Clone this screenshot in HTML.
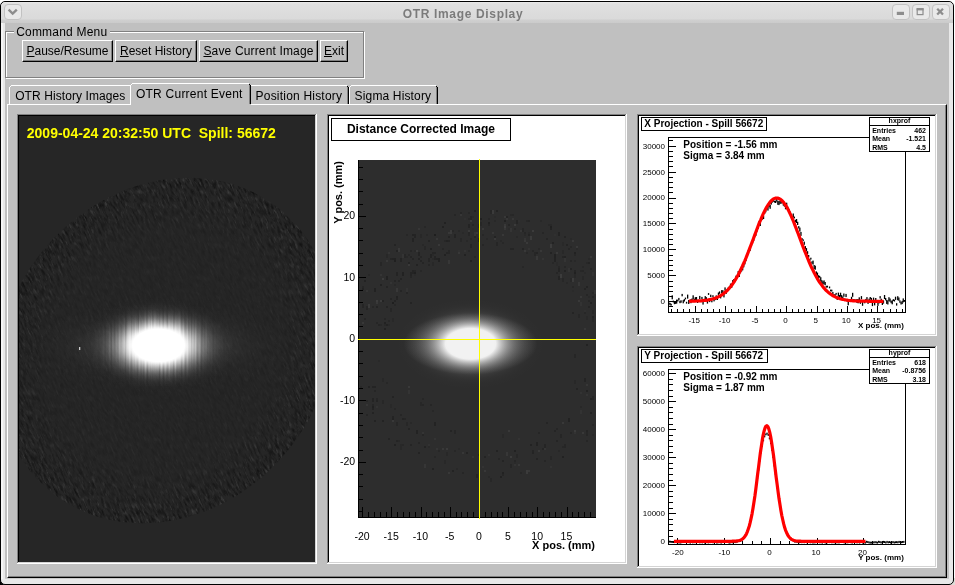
<!DOCTYPE html>
<html><head><meta charset="utf-8"><title>OTR Image Display</title>
<style>
html,body{margin:0;padding:0;background:#fff;}
body{width:955px;height:585px;overflow:hidden;position:relative;font-family:"Liberation Sans",sans-serif;font-size:12px;color:#000;}
.abs{position:absolute;}
div{box-sizing:border-box;}
.rb{position:absolute;background:#c0c0c0;border-top:1px solid #fff;border-left:1px solid #fff;border-right:1px solid #000;border-bottom:1px solid #000;}
.rb:after{content:"";position:absolute;left:0;top:0;right:0;bottom:0;border-right:1px solid #808080;border-bottom:1px solid #808080;}
.btxt{position:absolute;left:0;right:0;top:0;bottom:0;text-align:center;line-height:21px;font-size:12px;white-space:pre;z-index:2}
.btxt u{text-decoration:underline;text-underline-offset:1px}
svg{position:absolute;display:block;overflow:hidden}
text{font-family:"Liberation Sans",sans-serif;}
</style></head><body><div id="root" style="position:absolute;left:0;top:0;width:955px;height:585px;will-change:transform;transform:translateZ(0)">

<div class="abs" style="left:0;top:578px;width:8px;height:7px;background:#000"></div>
<div class="abs" style="left:946px;top:578px;width:9px;height:7px;background:#e0ded8"></div>
<div class="abs" id="win" style="left:0;top:1px;width:954px;height:584px;border:1px solid #000;border-radius:5px;background:#e8e8e8;overflow:hidden">
</div>
<div class="abs" style="left:1px;top:2px;width:952px;height:21px;border-radius:5px 5px 0 0;background:linear-gradient(#e9e9e9 0px,#e0e0e0 2px,#dadada 17px,#cfcfcf 18px,#cbcbcb 21px)"></div>
<div class="abs" style="left:1px;top:23px;width:2px;height:556px;background:#f4f4f4"></div>
<div class="abs" style="left:5px;top:23px;width:944px;height:556px;background:#c0c0c0"></div>
<div class="abs" style="left:5px;top:578px;width:944px;height:1px;background:#cacaca"></div>
<div class="abs" style="left:0;top:6px;width:926px;text-align:center;font-weight:bold;font-size:12px;letter-spacing:0.66px;color:#7b7b7b;line-height:16px">OTR Image Display</div>
<div class="abs" style="left:4px;top:4px;width:18px;height:16px;border:1px solid #c2c2c2;border-radius:4px;background:#e9e9e9"></div><svg style="left:4px;top:4px" width="17" height="16" viewBox="0 0 17 16"><path d="M4.6 5.6 L8.7 9.5 L12.8 5.6" fill="none" stroke="#8d8d8d" stroke-width="2.4"/></svg>
<div class="abs" style="left:892.2px;top:4px;width:17.5px;height:16px;border:1px solid #c2c2c2;border-radius:4px;background:#e9e9e9"></div><svg style="left:892.2px;top:4px" width="17" height="16" viewBox="0 0 17 16"><rect x="4.8" y="7.8" width="7.2" height="3.2" fill="#8d8d8d"/></svg>
<div class="abs" style="left:912.2px;top:4px;width:17.5px;height:16px;border:1px solid #c2c2c2;border-radius:4px;background:#e9e9e9"></div><svg style="left:912.2px;top:4px" width="17" height="16" viewBox="0 0 17 16"><rect x="5.2" y="5" width="5.8" height="5.6" fill="none" stroke="#8d8d8d" stroke-width="1.2"/><rect x="4.6" y="4" width="7" height="2.4" fill="#8d8d8d"/></svg>
<div class="abs" style="left:932.2px;top:4px;width:17.5px;height:16px;border:1px solid #c2c2c2;border-radius:4px;background:#e9e9e9"></div><svg style="left:932.2px;top:4px" width="17" height="16" viewBox="0 0 17 16"><path d="M5.2 4.7 L11.0 10.5 M11.0 4.7 L5.2 10.5" fill="none" stroke="#8d8d8d" stroke-width="2.3"/></svg>
<div class="abs" style="left:6px;top:32px;width:359px;height:47px;border:1px solid #fff"></div>
<div class="abs" style="left:5px;top:31px;width:359px;height:47px;border:1px solid #808080"></div>
<div class="abs" style="left:14px;top:24px;width:96px;height:16px;background:#c0c0c0;line-height:16px;font-size:12px;padding-left:2.2px;letter-spacing:0.2px;white-space:pre">Command Menu</div>
<div class="rb" style="left:22px;top:40px;width:91px;height:22px"><div class="btxt" style="letter-spacing:0px"><u>P</u>ause/Resume</div></div>
<div class="rb" style="left:115px;top:40px;width:82px;height:22px"><div class="btxt" style="letter-spacing:0px"><u>R</u>eset History</div></div>
<div class="rb" style="left:199px;top:40px;width:119px;height:22px"><div class="btxt" style="letter-spacing:0.15px"><u>S</u>ave Current Image</div></div>
<div class="rb" style="left:320px;top:40px;width:28px;height:22px"><div class="btxt" style="letter-spacing:0px"><u>E</u>xit</div></div>
<div class="abs" style="left:7px;top:104px;width:940px;height:474px;border-top:1px solid #fff;border-left:1px solid #fff;border-right:1px solid #000;border-bottom:1px solid #000"></div>
<div class="abs" style="left:8px;top:105px;width:938px;height:472px;border-right:1px solid #808080;border-bottom:1px solid #808080"></div>
<svg style="left:9px;top:85px" width="124" height="20" viewBox="0 0 124 20" shape-rendering="crispEdges"><rect x="0" y="2" width="1" height="17" fill="#fff"/><rect x="1" y="1" width="1" height="1" fill="#fff"/><rect x="2" y="0" width="120" height="1" fill="#fff"/><rect x="122" y="1" width="1" height="18" fill="#808080"/><rect x="122" y="1" width="1" height="1" fill="#000"/><rect x="123" y="2" width="1" height="17" fill="#000"/></svg><div class="abs" style="left:15.2px;top:88.5px;line-height:14px;font-size:12px;white-space:pre;letter-spacing:0.08px">OTR History Images</div>
<svg style="left:249px;top:85px" width="100" height="20" viewBox="0 0 100 20" shape-rendering="crispEdges"><rect x="0" y="2" width="1" height="17" fill="#fff"/><rect x="1" y="1" width="1" height="1" fill="#fff"/><rect x="2" y="0" width="96" height="1" fill="#fff"/><rect x="98" y="1" width="1" height="18" fill="#808080"/><rect x="98" y="1" width="1" height="1" fill="#000"/><rect x="99" y="2" width="1" height="17" fill="#000"/></svg><div class="abs" style="left:255.6px;top:88.5px;line-height:14px;font-size:12px;white-space:pre;letter-spacing:0.2px">Position History</div>
<svg style="left:349px;top:85px" width="89" height="20" viewBox="0 0 89 20" shape-rendering="crispEdges"><rect x="0" y="2" width="1" height="17" fill="#fff"/><rect x="1" y="1" width="1" height="1" fill="#fff"/><rect x="2" y="0" width="85" height="1" fill="#fff"/><rect x="87" y="1" width="1" height="18" fill="#808080"/><rect x="87" y="1" width="1" height="1" fill="#000"/><rect x="88" y="2" width="1" height="17" fill="#000"/></svg><div class="abs" style="left:354.6px;top:88.5px;line-height:14px;font-size:12px;white-space:pre;letter-spacing:0.15px">Sigma History</div>
<svg style="left:130px;top:83px" width="121" height="22" viewBox="0 0 121 22" shape-rendering="crispEdges"><rect x="0" y="2" width="121" height="21" fill="#c0c0c0"/><rect x="2" y="0" width="117" height="3" fill="#c0c0c0"/><rect x="0" y="2" width="1" height="20" fill="#fff"/><rect x="1" y="1" width="1" height="1" fill="#fff"/><rect x="2" y="0" width="117" height="1" fill="#fff"/><rect x="119" y="1" width="1" height="20" fill="#808080"/><rect x="119" y="1" width="1" height="1" fill="#000"/><rect x="120" y="2" width="1" height="19" fill="#000"/></svg><div class="abs" style="left:136px;top:86.5px;line-height:14px;font-size:12px;white-space:pre;letter-spacing:0.23px">OTR Current Event</div>
<div class="abs" style="left:17px;top:114px;width:300px;height:450px;background:#fff"></div><div class="abs" style="left:17px;top:114px;width:299px;height:449px;background:#808080"></div><div class="abs" style="left:18px;top:115px;width:298px;height:448px;background:#d4d4d4"></div><div class="abs" style="left:18px;top:115px;width:297px;height:447px;background:#000"></div>
<div class="abs" style="left:327px;top:114px;width:300px;height:450px;background:#fff"></div><div class="abs" style="left:327px;top:114px;width:299px;height:449px;background:#808080"></div><div class="abs" style="left:328px;top:115px;width:298px;height:448px;background:#d4d4d4"></div><div class="abs" style="left:328px;top:115px;width:297px;height:447px;background:#000"></div>
<div class="abs" style="left:637px;top:114px;width:300px;height:222px;background:#fff"></div><div class="abs" style="left:637px;top:114px;width:299px;height:221px;background:#808080"></div><div class="abs" style="left:638px;top:115px;width:298px;height:220px;background:#d4d4d4"></div><div class="abs" style="left:638px;top:115px;width:297px;height:219px;background:#000"></div>
<div class="abs" style="left:637px;top:346px;width:300px;height:222px;background:#fff"></div><div class="abs" style="left:637px;top:346px;width:299px;height:221px;background:#808080"></div><div class="abs" style="left:638px;top:347px;width:298px;height:220px;background:#d4d4d4"></div><div class="abs" style="left:638px;top:347px;width:297px;height:219px;background:#000"></div>
<svg style="left:19px;top:116px" width="296" height="446" viewBox="0 0 296 446"><defs><radialGradient id="lg" cx="0" cy="0" r="1" gradientUnits="userSpaceOnUse" gradientTransform="translate(139.5,229.4) scale(80,50)"><stop offset="0.0000" stop-color="rgb(255,255,255)" stop-opacity="1.0000"/><stop offset="0.0250" stop-color="rgb(255,255,255)" stop-opacity="1.0000"/><stop offset="0.0500" stop-color="rgb(255,255,255)" stop-opacity="1.0000"/><stop offset="0.0750" stop-color="rgb(255,255,255)" stop-opacity="1.0000"/><stop offset="0.1000" stop-color="rgb(255,255,255)" stop-opacity="1.0000"/><stop offset="0.1250" stop-color="rgb(255,255,255)" stop-opacity="1.0000"/><stop offset="0.1500" stop-color="rgb(255,255,255)" stop-opacity="1.0000"/><stop offset="0.1750" stop-color="rgb(255,255,255)" stop-opacity="1.0000"/><stop offset="0.2000" stop-color="rgb(255,255,255)" stop-opacity="1.0000"/><stop offset="0.2250" stop-color="rgb(255,255,255)" stop-opacity="1.0000"/><stop offset="0.2500" stop-color="rgb(255,255,255)" stop-opacity="1.0000"/><stop offset="0.2750" stop-color="rgb(255,255,255)" stop-opacity="1.0000"/><stop offset="0.3000" stop-color="rgb(255,255,255)" stop-opacity="1.0000"/><stop offset="0.3250" stop-color="rgb(255,255,255)" stop-opacity="1.0000"/><stop offset="0.3500" stop-color="rgb(255,255,255)" stop-opacity="0.9195"/><stop offset="0.3750" stop-color="rgb(255,255,255)" stop-opacity="0.7954"/><stop offset="0.4000" stop-color="rgb(255,255,255)" stop-opacity="0.6812"/><stop offset="0.4250" stop-color="rgb(255,255,255)" stop-opacity="0.5776"/><stop offset="0.4500" stop-color="rgb(255,255,255)" stop-opacity="0.4849"/><stop offset="0.4750" stop-color="rgb(255,255,255)" stop-opacity="0.4030"/><stop offset="0.5000" stop-color="rgb(255,255,255)" stop-opacity="0.3316"/><stop offset="0.5250" stop-color="rgb(255,255,255)" stop-opacity="0.2701"/><stop offset="0.5500" stop-color="rgb(255,255,255)" stop-opacity="0.2179"/><stop offset="0.5750" stop-color="rgb(255,255,255)" stop-opacity="0.1740"/><stop offset="0.6000" stop-color="rgb(255,255,255)" stop-opacity="0.1375"/><stop offset="0.6250" stop-color="rgb(255,255,255)" stop-opacity="0.1076"/><stop offset="0.6500" stop-color="rgb(255,255,255)" stop-opacity="0.0834"/><stop offset="0.6750" stop-color="rgb(255,255,255)" stop-opacity="0.0640"/><stop offset="0.7000" stop-color="rgb(255,255,255)" stop-opacity="0.0486"/><stop offset="0.7250" stop-color="rgb(255,255,255)" stop-opacity="0.0366"/><stop offset="0.7500" stop-color="rgb(255,255,255)" stop-opacity="0.0272"/><stop offset="0.7750" stop-color="rgb(255,255,255)" stop-opacity="0.0201"/><stop offset="0.8000" stop-color="rgb(255,255,255)" stop-opacity="0.0146"/><stop offset="0.8250" stop-color="rgb(255,255,255)" stop-opacity="0.0106"/><stop offset="0.8500" stop-color="rgb(255,255,255)" stop-opacity="0.0076"/><stop offset="0.8750" stop-color="rgb(255,255,255)" stop-opacity="0.0054"/><stop offset="0.9000" stop-color="rgb(255,255,255)" stop-opacity="0.0038"/><stop offset="0.9250" stop-color="rgb(255,255,255)" stop-opacity="0.0026"/><stop offset="0.9500" stop-color="rgb(255,255,255)" stop-opacity="0.0018"/><stop offset="0.9750" stop-color="rgb(255,255,255)" stop-opacity="0.0012"/><stop offset="1.0000" stop-color="rgb(255,255,255)" stop-opacity="0.0000"/></radialGradient><radialGradient id="lh" cx="0" cy="0" r="1" gradientUnits="userSpaceOnUse" gradientTransform="translate(140,229.4) scale(125,42)"><stop offset="0.0000" stop-color="rgb(255,255,255)" stop-opacity="0.2700"/><stop offset="0.0250" stop-color="rgb(255,255,255)" stop-opacity="0.2692"/><stop offset="0.0500" stop-color="rgb(255,255,255)" stop-opacity="0.2666"/><stop offset="0.0750" stop-color="rgb(255,255,255)" stop-opacity="0.2625"/><stop offset="0.1000" stop-color="rgb(255,255,255)" stop-opacity="0.2568"/><stop offset="0.1250" stop-color="rgb(255,255,255)" stop-opacity="0.2497"/><stop offset="0.1500" stop-color="rgb(255,255,255)" stop-opacity="0.2413"/><stop offset="0.1750" stop-color="rgb(255,255,255)" stop-opacity="0.2317"/><stop offset="0.2000" stop-color="rgb(255,255,255)" stop-opacity="0.2211"/><stop offset="0.2250" stop-color="rgb(255,255,255)" stop-opacity="0.2096"/><stop offset="0.2500" stop-color="rgb(255,255,255)" stop-opacity="0.1975"/><stop offset="0.2750" stop-color="rgb(255,255,255)" stop-opacity="0.1850"/><stop offset="0.3000" stop-color="rgb(255,255,255)" stop-opacity="0.1722"/><stop offset="0.3250" stop-color="rgb(255,255,255)" stop-opacity="0.1592"/><stop offset="0.3500" stop-color="rgb(255,255,255)" stop-opacity="0.1463"/><stop offset="0.3750" stop-color="rgb(255,255,255)" stop-opacity="0.1337"/><stop offset="0.4000" stop-color="rgb(255,255,255)" stop-opacity="0.1213"/><stop offset="0.4250" stop-color="rgb(255,255,255)" stop-opacity="0.1094"/><stop offset="0.4500" stop-color="rgb(255,255,255)" stop-opacity="0.0981"/><stop offset="0.4750" stop-color="rgb(255,255,255)" stop-opacity="0.0874"/><stop offset="0.5000" stop-color="rgb(255,255,255)" stop-opacity="0.0774"/><stop offset="0.5250" stop-color="rgb(255,255,255)" stop-opacity="0.0681"/><stop offset="0.5500" stop-color="rgb(255,255,255)" stop-opacity="0.0595"/><stop offset="0.5750" stop-color="rgb(255,255,255)" stop-opacity="0.0517"/><stop offset="0.6000" stop-color="rgb(255,255,255)" stop-opacity="0.0446"/><stop offset="0.6250" stop-color="rgb(255,255,255)" stop-opacity="0.0383"/><stop offset="0.6500" stop-color="rgb(255,255,255)" stop-opacity="0.0327"/><stop offset="0.6750" stop-color="rgb(255,255,255)" stop-opacity="0.0277"/><stop offset="0.7000" stop-color="rgb(255,255,255)" stop-opacity="0.0233"/><stop offset="0.7250" stop-color="rgb(255,255,255)" stop-opacity="0.0195"/><stop offset="0.7500" stop-color="rgb(255,255,255)" stop-opacity="0.0162"/><stop offset="0.7750" stop-color="rgb(255,255,255)" stop-opacity="0.0134"/><stop offset="0.8000" stop-color="rgb(255,255,255)" stop-opacity="0.0110"/><stop offset="0.8250" stop-color="rgb(255,255,255)" stop-opacity="0.0090"/><stop offset="0.8500" stop-color="rgb(255,255,255)" stop-opacity="0.0073"/><stop offset="0.8750" stop-color="rgb(255,255,255)" stop-opacity="0.0059"/><stop offset="0.9000" stop-color="rgb(255,255,255)" stop-opacity="0.0047"/><stop offset="0.9250" stop-color="rgb(255,255,255)" stop-opacity="0.0037"/><stop offset="0.9500" stop-color="rgb(255,255,255)" stop-opacity="0.0030"/><stop offset="0.9750" stop-color="rgb(255,255,255)" stop-opacity="0.0023"/><stop offset="1.0000" stop-color="rgb(255,255,255)" stop-opacity="0.0000"/></radialGradient><clipPath id="lc"><ellipse cx="146.4" cy="234.5" rx="181.8" ry="158.2" transform="rotate(-51 146.4 234.5)"/></clipPath><filter id="ln" x="0" y="0" width="100%" height="100%" color-interpolation-filters="sRGB"><feTurbulence type="fractalNoise" baseFrequency="0.45 0.15" numOctaves="2" seed="3" result="t"/><feColorMatrix type="matrix" values="0 0 0 0 0  0 0 0 0 0  0 0 0 0 0  1.5 0 0 0 -0.62"/></filter><filter id="ln2" x="0" y="0" width="100%" height="100%" color-interpolation-filters="sRGB"><feTurbulence type="fractalNoise" baseFrequency="0.45 0.15" numOctaves="2" seed="9" result="t"/><feColorMatrix type="matrix" values="0 0 0 0 1  0 0 0 0 1  0 0 0 0 1  0.45 0 0 0 -0.24"/></filter><radialGradient id="lm" cx="0" cy="0" r="1" gradientUnits="userSpaceOnUse" gradientTransform="translate(146.4,234.5) rotate(-51) scale(181.8,158.2)"><stop offset="0" stop-color="#fff" stop-opacity="0.13"/><stop offset="0.7" stop-color="#fff" stop-opacity="0.27"/><stop offset="0.92" stop-color="#fff" stop-opacity="0.75"/><stop offset="1" stop-color="#fff" stop-opacity="1"/></radialGradient><mask id="lmask"><rect width="296" height="446" fill="url(#lm)"/></mask><filter id="ls" x="0" y="0" width="100%" height="100%" color-interpolation-filters="sRGB"><feTurbulence type="fractalNoise" baseFrequency="0.5 0.008" numOctaves="2" seed="5"/><feColorMatrix type="matrix" values="0 0 0 0 1  0 0 0 0 1  0 0 0 0 1  1.3 0 0 0 -0.3"/></filter><radialGradient id="lg2" cx="0" cy="0" r="1" gradientUnits="userSpaceOnUse" gradientTransform="translate(139.5,229.4) scale(85,52)"><stop offset="0.0000" stop-color="rgb(255,255,255)" stop-opacity="1.0000"/><stop offset="0.0250" stop-color="rgb(255,255,255)" stop-opacity="1.0000"/><stop offset="0.0500" stop-color="rgb(255,255,255)" stop-opacity="1.0000"/><stop offset="0.0750" stop-color="rgb(255,255,255)" stop-opacity="1.0000"/><stop offset="0.1000" stop-color="rgb(255,255,255)" stop-opacity="1.0000"/><stop offset="0.1250" stop-color="rgb(255,255,255)" stop-opacity="1.0000"/><stop offset="0.1500" stop-color="rgb(255,255,255)" stop-opacity="1.0000"/><stop offset="0.1750" stop-color="rgb(255,255,255)" stop-opacity="1.0000"/><stop offset="0.2000" stop-color="rgb(255,255,255)" stop-opacity="1.0000"/><stop offset="0.2250" stop-color="rgb(255,255,255)" stop-opacity="1.0000"/><stop offset="0.2500" stop-color="rgb(255,255,255)" stop-opacity="1.0000"/><stop offset="0.2750" stop-color="rgb(255,255,255)" stop-opacity="1.0000"/><stop offset="0.3000" stop-color="rgb(255,255,255)" stop-opacity="1.0000"/><stop offset="0.3250" stop-color="rgb(255,255,255)" stop-opacity="1.0000"/><stop offset="0.3500" stop-color="rgb(255,255,255)" stop-opacity="0.9758"/><stop offset="0.3750" stop-color="rgb(255,255,255)" stop-opacity="0.8441"/><stop offset="0.4000" stop-color="rgb(255,255,255)" stop-opacity="0.7229"/><stop offset="0.4250" stop-color="rgb(255,255,255)" stop-opacity="0.6129"/><stop offset="0.4500" stop-color="rgb(255,255,255)" stop-opacity="0.5145"/><stop offset="0.4750" stop-color="rgb(255,255,255)" stop-opacity="0.4276"/><stop offset="0.5000" stop-color="rgb(255,255,255)" stop-opacity="0.3519"/><stop offset="0.5250" stop-color="rgb(255,255,255)" stop-opacity="0.2867"/><stop offset="0.5500" stop-color="rgb(255,255,255)" stop-opacity="0.2312"/><stop offset="0.5750" stop-color="rgb(255,255,255)" stop-opacity="0.1846"/><stop offset="0.6000" stop-color="rgb(255,255,255)" stop-opacity="0.1460"/><stop offset="0.6250" stop-color="rgb(255,255,255)" stop-opacity="0.1142"/><stop offset="0.6500" stop-color="rgb(255,255,255)" stop-opacity="0.0885"/><stop offset="0.6750" stop-color="rgb(255,255,255)" stop-opacity="0.0679"/><stop offset="0.7000" stop-color="rgb(255,255,255)" stop-opacity="0.0516"/><stop offset="0.7250" stop-color="rgb(255,255,255)" stop-opacity="0.0388"/><stop offset="0.7500" stop-color="rgb(255,255,255)" stop-opacity="0.0289"/><stop offset="0.7750" stop-color="rgb(255,255,255)" stop-opacity="0.0213"/><stop offset="0.8000" stop-color="rgb(255,255,255)" stop-opacity="0.0155"/><stop offset="0.8250" stop-color="rgb(255,255,255)" stop-opacity="0.0112"/><stop offset="0.8500" stop-color="rgb(255,255,255)" stop-opacity="0.0080"/><stop offset="0.8750" stop-color="rgb(255,255,255)" stop-opacity="0.0057"/><stop offset="0.9000" stop-color="rgb(255,255,255)" stop-opacity="0.0040"/><stop offset="0.9250" stop-color="rgb(255,255,255)" stop-opacity="0.0028"/><stop offset="0.9500" stop-color="rgb(255,255,255)" stop-opacity="0.0019"/><stop offset="0.9750" stop-color="rgb(255,255,255)" stop-opacity="0.0013"/><stop offset="1.0000" stop-color="rgb(255,255,255)" stop-opacity="0.0000"/></radialGradient><mask id="lsm"><rect x="30" y="150" width="230" height="160" filter="url(#ls)"/></mask></defs><rect width="296" height="446" fill="#262626"/><g clip-path="url(#lc)"><g mask="url(#lmask)"><g transform="skewX(22)"><rect x="-200" width="500" height="446" filter="url(#ln)"/><rect x="-200" width="500" height="446" filter="url(#ln2)"/></g></g></g><rect width="296" height="446" fill="url(#lh)"/><rect width="296" height="446" fill="url(#lg)"/><rect x="30" y="150" width="230" height="160" fill="url(#lg2)" mask="url(#lsm)"/><rect x="60" y="231" width="1.3" height="3" fill="#e8e8e8" opacity="0.85"/><text x="7.8" y="22" font-size="14" font-weight="bold" fill="#ffff00" xml:space="preserve" style="white-space:pre">2009-04-24 20:32:50 UTC  Spill: 56672</text></svg>
<svg style="left:329px;top:116px" width="296" height="446" viewBox="329 116 296 446"><defs><radialGradient id="mg" cx="0" cy="0" r="1" gradientUnits="userSpaceOnUse" gradientTransform="translate(470.6,343.8) scale(77.4,47.5)"><stop offset="0.0000" stop-color="rgb(242,242,242)" stop-opacity="1.0000"/><stop offset="0.0250" stop-color="rgb(242,242,242)" stop-opacity="1.0000"/><stop offset="0.0500" stop-color="rgb(242,242,242)" stop-opacity="1.0000"/><stop offset="0.0750" stop-color="rgb(242,242,242)" stop-opacity="1.0000"/><stop offset="0.1000" stop-color="rgb(242,242,242)" stop-opacity="1.0000"/><stop offset="0.1250" stop-color="rgb(242,242,242)" stop-opacity="1.0000"/><stop offset="0.1500" stop-color="rgb(242,242,242)" stop-opacity="1.0000"/><stop offset="0.1750" stop-color="rgb(242,242,242)" stop-opacity="1.0000"/><stop offset="0.2000" stop-color="rgb(242,242,242)" stop-opacity="1.0000"/><stop offset="0.2250" stop-color="rgb(242,242,242)" stop-opacity="1.0000"/><stop offset="0.2500" stop-color="rgb(242,242,242)" stop-opacity="1.0000"/><stop offset="0.2750" stop-color="rgb(242,242,242)" stop-opacity="1.0000"/><stop offset="0.3000" stop-color="rgb(242,242,242)" stop-opacity="1.0000"/><stop offset="0.3250" stop-color="rgb(242,242,242)" stop-opacity="0.9880"/><stop offset="0.3500" stop-color="rgb(242,242,242)" stop-opacity="0.8632"/><stop offset="0.3750" stop-color="rgb(242,242,242)" stop-opacity="0.7467"/><stop offset="0.4000" stop-color="rgb(242,242,242)" stop-opacity="0.6395"/><stop offset="0.4250" stop-color="rgb(242,242,242)" stop-opacity="0.5422"/><stop offset="0.4500" stop-color="rgb(242,242,242)" stop-opacity="0.4552"/><stop offset="0.4750" stop-color="rgb(242,242,242)" stop-opacity="0.3783"/><stop offset="0.5000" stop-color="rgb(242,242,242)" stop-opacity="0.3113"/><stop offset="0.5250" stop-color="rgb(242,242,242)" stop-opacity="0.2536"/><stop offset="0.5500" stop-color="rgb(242,242,242)" stop-opacity="0.2045"/><stop offset="0.5750" stop-color="rgb(242,242,242)" stop-opacity="0.1633"/><stop offset="0.6000" stop-color="rgb(242,242,242)" stop-opacity="0.1291"/><stop offset="0.6250" stop-color="rgb(242,242,242)" stop-opacity="0.1011"/><stop offset="0.6500" stop-color="rgb(242,242,242)" stop-opacity="0.0783"/><stop offset="0.6750" stop-color="rgb(242,242,242)" stop-opacity="0.0601"/><stop offset="0.7000" stop-color="rgb(242,242,242)" stop-opacity="0.0456"/><stop offset="0.7250" stop-color="rgb(242,242,242)" stop-opacity="0.0343"/><stop offset="0.7500" stop-color="rgb(242,242,242)" stop-opacity="0.0256"/><stop offset="0.7750" stop-color="rgb(242,242,242)" stop-opacity="0.0188"/><stop offset="0.8000" stop-color="rgb(242,242,242)" stop-opacity="0.0137"/><stop offset="0.8250" stop-color="rgb(242,242,242)" stop-opacity="0.0099"/><stop offset="0.8500" stop-color="rgb(242,242,242)" stop-opacity="0.0071"/><stop offset="0.8750" stop-color="rgb(242,242,242)" stop-opacity="0.0050"/><stop offset="0.9000" stop-color="rgb(242,242,242)" stop-opacity="0.0035"/><stop offset="0.9250" stop-color="rgb(242,242,242)" stop-opacity="0.0024"/><stop offset="0.9500" stop-color="rgb(242,242,242)" stop-opacity="0.0017"/><stop offset="0.9750" stop-color="rgb(242,242,242)" stop-opacity="0.0011"/><stop offset="1.0000" stop-color="rgb(242,242,242)" stop-opacity="0.0000"/></radialGradient><radialGradient id="mh" cx="0" cy="0" r="1" gradientUnits="userSpaceOnUse" gradientTransform="translate(470.5,343.8) scale(67,31)"><stop offset="0" stop-color="#f2f2f2" stop-opacity="0.34"/><stop offset="0.45" stop-color="#f2f2f2" stop-opacity="0.27"/><stop offset="0.75" stop-color="#f2f2f2" stop-opacity="0.13"/><stop offset="0.92" stop-color="#f2f2f2" stop-opacity="0.045"/><stop offset="1" stop-color="#f2f2f2" stop-opacity="0"/></radialGradient><clipPath id="mc"><rect x="358" y="160" width="238" height="358"/></clipPath></defs><rect x="329" y="116" width="296" height="446" fill="#fff"/><rect x="331.5" y="118.5" width="179" height="22" fill="#fff" stroke="#000" stroke-width="1"/><text x="346.9" y="132.6" font-size="12" font-weight="bold">Distance Corrected Image</text><rect x="358" y="160" width="238" height="358" fill="#2d2d2d"/><g clip-path="url(#mc)"><rect x="504" y="226" width="2" height="4" fill="#484848" opacity="0.38"/><rect x="396" y="288" width="2" height="4" fill="#484848" opacity="0.45"/><rect x="410" y="276" width="2" height="2" fill="#1c1c1c" opacity="0.42"/><rect x="374" y="288" width="2" height="4" fill="#1c1c1c" opacity="0.59"/><rect x="434" y="234" width="2" height="2" fill="#1c1c1c" opacity="0.53"/><rect x="584" y="310" width="2" height="2" fill="#484848" opacity="0.51"/><rect x="546" y="238" width="2" height="2" fill="#1c1c1c" opacity="0.46"/><rect x="488" y="222" width="2" height="2" fill="#1c1c1c" opacity="0.36"/><rect x="468" y="212" width="2" height="2" fill="#1c1c1c" opacity="0.33"/><rect x="564" y="266" width="2" height="2" fill="#1c1c1c" opacity="0.36"/><rect x="390" y="282" width="2" height="2" fill="#484848" opacity="0.29"/><rect x="390" y="308" width="2" height="4" fill="#1c1c1c" opacity="0.37"/><rect x="466" y="240" width="2" height="2" fill="#1c1c1c" opacity="0.23"/><rect x="550" y="224" width="2" height="2" fill="#1c1c1c" opacity="0.25"/><rect x="432" y="262" width="2" height="4" fill="#1c1c1c" opacity="0.27"/><rect x="468" y="232" width="2" height="2" fill="#1c1c1c" opacity="0.37"/><rect x="524" y="238" width="2" height="2" fill="#484848" opacity="0.31"/><rect x="558" y="232" width="2" height="4" fill="#1c1c1c" opacity="0.60"/><rect x="452" y="230" width="2" height="2" fill="#1c1c1c" opacity="0.29"/><rect x="570" y="246" width="2" height="2" fill="#1c1c1c" opacity="0.35"/><rect x="588" y="306" width="2" height="2" fill="#1c1c1c" opacity="0.44"/><rect x="530" y="236" width="2" height="4" fill="#484848" opacity="0.53"/><rect x="586" y="286" width="2" height="2" fill="#1c1c1c" opacity="0.56"/><rect x="400" y="278" width="2" height="2" fill="#1c1c1c" opacity="0.47"/><rect x="524" y="234" width="2" height="2" fill="#1c1c1c" opacity="0.24"/><rect x="574" y="252" width="2" height="4" fill="#1c1c1c" opacity="0.32"/><rect x="590" y="268" width="2" height="2" fill="#1c1c1c" opacity="0.39"/><rect x="434" y="234" width="2" height="2" fill="#1c1c1c" opacity="0.57"/><rect x="562" y="278" width="2" height="4" fill="#1c1c1c" opacity="0.30"/><rect x="474" y="210" width="2" height="2" fill="#1c1c1c" opacity="0.56"/><rect x="364" y="318" width="2" height="2" fill="#1c1c1c" opacity="0.44"/><rect x="376" y="302" width="2" height="2" fill="#1c1c1c" opacity="0.59"/><rect x="494" y="220" width="2" height="2" fill="#1c1c1c" opacity="0.23"/><rect x="470" y="220" width="2" height="2" fill="#484848" opacity="0.52"/><rect x="382" y="300" width="2" height="2" fill="#1c1c1c" opacity="0.55"/><rect x="518" y="220" width="2" height="2" fill="#484848" opacity="0.45"/><rect x="528" y="232" width="2" height="2" fill="#1c1c1c" opacity="0.24"/><rect x="586" y="294" width="2" height="2" fill="#1c1c1c" opacity="0.36"/><rect x="410" y="250" width="2" height="2" fill="#1c1c1c" opacity="0.41"/><rect x="482" y="234" width="2" height="2" fill="#1c1c1c" opacity="0.29"/><rect x="424" y="246" width="2" height="4" fill="#1c1c1c" opacity="0.30"/><rect x="434" y="252" width="2" height="2" fill="#1c1c1c" opacity="0.46"/><rect x="510" y="214" width="2" height="2" fill="#1c1c1c" opacity="0.28"/><rect x="512" y="218" width="2" height="2" fill="#484848" opacity="0.35"/><rect x="460" y="238" width="2" height="4" fill="#1c1c1c" opacity="0.34"/><rect x="394" y="300" width="2" height="2" fill="#1c1c1c" opacity="0.53"/><rect x="594" y="290" width="2" height="4" fill="#484848" opacity="0.35"/><rect x="480" y="222" width="2" height="4" fill="#1c1c1c" opacity="0.33"/><rect x="398" y="280" width="2" height="2" fill="#1c1c1c" opacity="0.43"/><rect x="554" y="234" width="2" height="2" fill="#1c1c1c" opacity="0.36"/><rect x="588" y="262" width="2" height="2" fill="#1c1c1c" opacity="0.52"/><rect x="384" y="322" width="2" height="2" fill="#1c1c1c" opacity="0.58"/><rect x="432" y="252" width="2" height="2" fill="#1c1c1c" opacity="0.49"/><rect x="406" y="256" width="2" height="2" fill="#1c1c1c" opacity="0.31"/><rect x="542" y="232" width="2" height="2" fill="#1c1c1c" opacity="0.36"/><rect x="386" y="254" width="2" height="4" fill="#1c1c1c" opacity="0.25"/><rect x="504" y="224" width="2" height="4" fill="#484848" opacity="0.42"/><rect x="436" y="238" width="2" height="2" fill="#484848" opacity="0.39"/><rect x="442" y="248" width="2" height="2" fill="#1c1c1c" opacity="0.29"/><rect x="362" y="286" width="2" height="2" fill="#484848" opacity="0.30"/><rect x="428" y="264" width="2" height="2" fill="#1c1c1c" opacity="0.38"/><rect x="468" y="218" width="2" height="2" fill="#1c1c1c" opacity="0.29"/><rect x="386" y="286" width="2" height="2" fill="#1c1c1c" opacity="0.47"/><rect x="376" y="300" width="2" height="4" fill="#484848" opacity="0.58"/><rect x="490" y="210" width="2" height="2" fill="#1c1c1c" opacity="0.38"/><rect x="464" y="218" width="2" height="2" fill="#1c1c1c" opacity="0.41"/><rect x="386" y="276" width="2" height="4" fill="#1c1c1c" opacity="0.58"/><rect x="380" y="284" width="2" height="2" fill="#1c1c1c" opacity="0.59"/><rect x="478" y="226" width="2" height="2" fill="#1c1c1c" opacity="0.40"/><rect x="458" y="250" width="2" height="4" fill="#484848" opacity="0.42"/><rect x="384" y="324" width="2" height="2" fill="#1c1c1c" opacity="0.23"/><rect x="474" y="232" width="2" height="4" fill="#484848" opacity="0.31"/><rect x="496" y="242" width="2" height="4" fill="#1c1c1c" opacity="0.41"/><rect x="592" y="292" width="2" height="2" fill="#1c1c1c" opacity="0.25"/><rect x="414" y="274" width="2" height="2" fill="#1c1c1c" opacity="0.20"/><rect x="562" y="242" width="2" height="4" fill="#1c1c1c" opacity="0.24"/><rect x="422" y="262" width="2" height="2" fill="#1c1c1c" opacity="0.49"/><rect x="414" y="234" width="2" height="4" fill="#1c1c1c" opacity="0.53"/><rect x="448" y="232" width="2" height="2" fill="#484848" opacity="0.41"/><rect x="382" y="278" width="2" height="2" fill="#484848" opacity="0.57"/><rect x="446" y="240" width="2" height="2" fill="#1c1c1c" opacity="0.56"/><rect x="586" y="262" width="2" height="2" fill="#1c1c1c" opacity="0.25"/><rect x="574" y="252" width="2" height="2" fill="#1c1c1c" opacity="0.37"/><rect x="372" y="306" width="2" height="2" fill="#1c1c1c" opacity="0.36"/><rect x="436" y="258" width="2" height="2" fill="#1c1c1c" opacity="0.56"/><rect x="384" y="318" width="2" height="2" fill="#1c1c1c" opacity="0.40"/><rect x="432" y="254" width="2" height="2" fill="#1c1c1c" opacity="0.21"/><rect x="402" y="254" width="2" height="4" fill="#484848" opacity="0.26"/><rect x="572" y="278" width="2" height="2" fill="#484848" opacity="0.57"/><rect x="580" y="302" width="2" height="4" fill="#484848" opacity="0.23"/><rect x="592" y="296" width="2" height="2" fill="#1c1c1c" opacity="0.37"/><rect x="458" y="250" width="2" height="2" fill="#1c1c1c" opacity="0.27"/><rect x="504" y="220" width="2" height="2" fill="#1c1c1c" opacity="0.44"/><rect x="536" y="256" width="2" height="4" fill="#484848" opacity="0.43"/><rect x="582" y="266" width="2" height="2" fill="#1c1c1c" opacity="0.31"/><rect x="584" y="288" width="2" height="2" fill="#1c1c1c" opacity="0.51"/><rect x="408" y="262" width="2" height="2" fill="#1c1c1c" opacity="0.52"/><rect x="542" y="258" width="2" height="2" fill="#484848" opacity="0.29"/><rect x="366" y="306" width="2" height="4" fill="#1c1c1c" opacity="0.43"/><rect x="476" y="232" width="2" height="2" fill="#484848" opacity="0.48"/><rect x="394" y="244" width="2" height="2" fill="#1c1c1c" opacity="0.50"/><rect x="562" y="256" width="2" height="2" fill="#1c1c1c" opacity="0.46"/><rect x="554" y="254" width="2" height="4" fill="#1c1c1c" opacity="0.59"/><rect x="460" y="212" width="2" height="2" fill="#1c1c1c" opacity="0.42"/><rect x="424" y="226" width="2" height="2" fill="#1c1c1c" opacity="0.35"/><rect x="472" y="224" width="2" height="4" fill="#1c1c1c" opacity="0.37"/><rect x="478" y="224" width="2" height="2" fill="#1c1c1c" opacity="0.39"/><rect x="570" y="238" width="2" height="2" fill="#1c1c1c" opacity="0.21"/><rect x="400" y="258" width="2" height="4" fill="#1c1c1c" opacity="0.50"/><rect x="528" y="220" width="2" height="2" fill="#1c1c1c" opacity="0.43"/><rect x="420" y="256" width="2" height="2" fill="#1c1c1c" opacity="0.37"/><rect x="496" y="210" width="2" height="2" fill="#1c1c1c" opacity="0.57"/><rect x="416" y="250" width="2" height="2" fill="#484848" opacity="0.44"/><rect x="500" y="240" width="2" height="2" fill="#1c1c1c" opacity="0.25"/><rect x="508" y="224" width="2" height="2" fill="#1c1c1c" opacity="0.46"/><rect x="430" y="248" width="2" height="2" fill="#1c1c1c" opacity="0.58"/><rect x="420" y="260" width="2" height="2" fill="#1c1c1c" opacity="0.51"/><rect x="448" y="240" width="2" height="2" fill="#1c1c1c" opacity="0.45"/><rect x="416" y="264" width="2" height="2" fill="#1c1c1c" opacity="0.55"/><rect x="586" y="316" width="2" height="4" fill="#1c1c1c" opacity="0.21"/><rect x="592" y="316" width="2" height="2" fill="#1c1c1c" opacity="0.57"/><rect x="578" y="282" width="2" height="4" fill="#484848" opacity="0.39"/><rect x="570" y="268" width="2" height="2" fill="#1c1c1c" opacity="0.52"/><rect x="506" y="218" width="2" height="2" fill="#484848" opacity="0.38"/><rect x="412" y="258" width="2" height="2" fill="#1c1c1c" opacity="0.46"/><rect x="376" y="322" width="2" height="2" fill="#1c1c1c" opacity="0.37"/><rect x="524" y="250" width="2" height="2" fill="#484848" opacity="0.42"/><rect x="510" y="228" width="2" height="4" fill="#484848" opacity="0.32"/><rect x="414" y="272" width="2" height="2" fill="#1c1c1c" opacity="0.48"/><rect x="488" y="218" width="2" height="2" fill="#1c1c1c" opacity="0.29"/><rect x="438" y="244" width="2" height="2" fill="#484848" opacity="0.48"/><rect x="460" y="214" width="2" height="2" fill="#484848" opacity="0.38"/><rect x="402" y="272" width="2" height="4" fill="#1c1c1c" opacity="0.59"/><rect x="414" y="250" width="2" height="2" fill="#1c1c1c" opacity="0.21"/><rect x="428" y="240" width="2" height="2" fill="#1c1c1c" opacity="0.52"/><rect x="472" y="216" width="2" height="2" fill="#1c1c1c" opacity="0.24"/><rect x="504" y="216" width="2" height="2" fill="#484848" opacity="0.41"/><rect x="472" y="226" width="2" height="4" fill="#484848" opacity="0.23"/><rect x="470" y="218" width="2" height="2" fill="#1c1c1c" opacity="0.31"/><rect x="588" y="296" width="2" height="2" fill="#1c1c1c" opacity="0.24"/><rect x="396" y="272" width="2" height="4" fill="#1c1c1c" opacity="0.51"/><rect x="480" y="218" width="2" height="2" fill="#1c1c1c" opacity="0.52"/><rect x="536" y="252" width="2" height="2" fill="#1c1c1c" opacity="0.48"/><rect x="380" y="300" width="2" height="2" fill="#484848" opacity="0.54"/><rect x="386" y="260" width="2" height="2" fill="#484848" opacity="0.41"/><rect x="412" y="238" width="2" height="4" fill="#1c1c1c" opacity="0.57"/><rect x="558" y="266" width="2" height="2" fill="#1c1c1c" opacity="0.33"/><rect x="524" y="232" width="2" height="2" fill="#1c1c1c" opacity="0.39"/><rect x="418" y="258" width="2" height="2" fill="#1c1c1c" opacity="0.56"/><rect x="420" y="270" width="2" height="2" fill="#1c1c1c" opacity="0.33"/><rect x="574" y="270" width="2" height="4" fill="#1c1c1c" opacity="0.44"/><rect x="564" y="270" width="2" height="2" fill="#1c1c1c" opacity="0.56"/><rect x="368" y="304" width="2" height="4" fill="#484848" opacity="0.54"/><rect x="492" y="232" width="2" height="2" fill="#484848" opacity="0.39"/><rect x="560" y="274" width="2" height="4" fill="#484848" opacity="0.59"/><rect x="390" y="258" width="2" height="2" fill="#1c1c1c" opacity="0.46"/><rect x="556" y="272" width="2" height="2" fill="#1c1c1c" opacity="0.38"/><rect x="564" y="258" width="2" height="4" fill="#484848" opacity="0.26"/><rect x="540" y="250" width="2" height="2" fill="#484848" opacity="0.45"/><rect x="378" y="324" width="2" height="2" fill="#1c1c1c" opacity="0.43"/><rect x="572" y="280" width="2" height="2" fill="#484848" opacity="0.53"/><rect x="590" y="302" width="2" height="2" fill="#1c1c1c" opacity="0.56"/><rect x="432" y="258" width="2" height="2" fill="#1c1c1c" opacity="0.21"/><rect x="570" y="278" width="2" height="4" fill="#1c1c1c" opacity="0.28"/><rect x="472" y="228" width="2" height="2" fill="#1c1c1c" opacity="0.33"/><rect x="520" y="230" width="2" height="2" fill="#484848" opacity="0.34"/><rect x="434" y="256" width="2" height="4" fill="#1c1c1c" opacity="0.50"/><rect x="410" y="272" width="2" height="4" fill="#1c1c1c" opacity="0.48"/><rect x="494" y="236" width="2" height="2" fill="#1c1c1c" opacity="0.54"/><rect x="380" y="274" width="2" height="2" fill="#484848" opacity="0.32"/><rect x="528" y="234" width="2" height="2" fill="#1c1c1c" opacity="0.50"/><rect x="470" y="244" width="2" height="4" fill="#1c1c1c" opacity="0.49"/><rect x="550" y="226" width="2" height="2" fill="#1c1c1c" opacity="0.38"/><rect x="522" y="248" width="2" height="2" fill="#1c1c1c" opacity="0.47"/><rect x="428" y="258" width="2" height="4" fill="#1c1c1c" opacity="0.44"/><rect x="588" y="300" width="2" height="2" fill="#1c1c1c" opacity="0.37"/><rect x="408" y="264" width="2" height="2" fill="#484848" opacity="0.46"/><rect x="396" y="250" width="2" height="2" fill="#1c1c1c" opacity="0.57"/><rect x="442" y="226" width="2" height="2" fill="#1c1c1c" opacity="0.59"/><rect x="394" y="260" width="2" height="2" fill="#1c1c1c" opacity="0.30"/><rect x="574" y="274" width="2" height="4" fill="#1c1c1c" opacity="0.28"/><rect x="538" y="248" width="2" height="2" fill="#1c1c1c" opacity="0.30"/><rect x="474" y="236" width="2" height="2" fill="#1c1c1c" opacity="0.43"/><rect x="590" y="256" width="2" height="2" fill="#484848" opacity="0.43"/><rect x="412" y="270" width="2" height="4" fill="#1c1c1c" opacity="0.48"/><rect x="550" y="226" width="2" height="4" fill="#1c1c1c" opacity="0.55"/><rect x="504" y="220" width="2" height="2" fill="#1c1c1c" opacity="0.42"/><rect x="572" y="240" width="2" height="2" fill="#484848" opacity="0.44"/><rect x="564" y="236" width="2" height="2" fill="#1c1c1c" opacity="0.53"/><rect x="582" y="270" width="2" height="2" fill="#1c1c1c" opacity="0.36"/><rect x="388" y="252" width="2" height="2" fill="#484848" opacity="0.32"/><rect x="426" y="234" width="2" height="2" fill="#1c1c1c" opacity="0.26"/><rect x="512" y="248" width="2" height="2" fill="#1c1c1c" opacity="0.43"/><rect x="584" y="272" width="2" height="2" fill="#1c1c1c" opacity="0.22"/><rect x="394" y="258" width="2" height="4" fill="#1c1c1c" opacity="0.58"/><rect x="454" y="234" width="2" height="4" fill="#1c1c1c" opacity="0.50"/><rect x="492" y="210" width="2" height="4" fill="#484848" opacity="0.53"/><rect x="580" y="296" width="2" height="2" fill="#484848" opacity="0.41"/><rect x="512" y="214" width="2" height="2" fill="#1c1c1c" opacity="0.32"/><rect x="448" y="236" width="2" height="2" fill="#1c1c1c" opacity="0.50"/><rect x="552" y="242" width="2" height="2" fill="#1c1c1c" opacity="0.54"/><rect x="576" y="246" width="2" height="4" fill="#484848" opacity="0.48"/><rect x="478" y="238" width="2" height="4" fill="#1c1c1c" opacity="0.58"/><rect x="364" y="280" width="2" height="2" fill="#1c1c1c" opacity="0.55"/><rect x="516" y="220" width="2" height="4" fill="#1c1c1c" opacity="0.43"/><rect x="392" y="302" width="2" height="2" fill="#1c1c1c" opacity="0.55"/><rect x="462" y="232" width="2" height="2" fill="#1c1c1c" opacity="0.21"/><rect x="582" y="276" width="2" height="4" fill="#1c1c1c" opacity="0.26"/><rect x="430" y="254" width="2" height="4" fill="#1c1c1c" opacity="0.56"/><rect x="550" y="244" width="2" height="4" fill="#484848" opacity="0.55"/><rect x="588" y="258" width="2" height="2" fill="#1c1c1c" opacity="0.28"/><rect x="394" y="280" width="2" height="2" fill="#1c1c1c" opacity="0.45"/><rect x="422" y="244" width="2" height="2" fill="#1c1c1c" opacity="0.28"/><rect x="396" y="296" width="2" height="2" fill="#1c1c1c" opacity="0.58"/><rect x="556" y="252" width="2" height="2" fill="#484848" opacity="0.48"/><rect x="376" y="306" width="2" height="2" fill="#1c1c1c" opacity="0.54"/><rect x="566" y="244" width="2" height="2" fill="#1c1c1c" opacity="0.52"/><rect x="532" y="230" width="2" height="2" fill="#484848" opacity="0.59"/><rect x="390" y="298" width="2" height="2" fill="#1c1c1c" opacity="0.46"/><rect x="508" y="228" width="2" height="2" fill="#1c1c1c" opacity="0.20"/><rect x="458" y="230" width="2" height="2" fill="#1c1c1c" opacity="0.27"/><rect x="380" y="324" width="2" height="2" fill="#1c1c1c" opacity="0.27"/><rect x="362" y="286" width="2" height="4" fill="#1c1c1c" opacity="0.57"/><rect x="464" y="250" width="2" height="2" fill="#484848" opacity="0.27"/><rect x="468" y="224" width="2" height="4" fill="#1c1c1c" opacity="0.51"/><rect x="482" y="228" width="2" height="2" fill="#484848" opacity="0.44"/><rect x="414" y="270" width="2" height="4" fill="#1c1c1c" opacity="0.42"/><rect x="568" y="248" width="2" height="2" fill="#1c1c1c" opacity="0.40"/><rect x="574" y="260" width="2" height="2" fill="#1c1c1c" opacity="0.28"/><rect x="388" y="320" width="2" height="2" fill="#1c1c1c" opacity="0.33"/><rect x="450" y="230" width="2" height="4" fill="#484848" opacity="0.49"/><rect x="400" y="290" width="2" height="2" fill="#1c1c1c" opacity="0.43"/><rect x="470" y="218" width="2" height="2" fill="#1c1c1c" opacity="0.22"/><rect x="514" y="224" width="2" height="2" fill="#484848" opacity="0.51"/><rect x="488" y="222" width="2" height="4" fill="#1c1c1c" opacity="0.30"/><rect x="592" y="272" width="2" height="4" fill="#484848" opacity="0.22"/><rect x="516" y="236" width="2" height="2" fill="#1c1c1c" opacity="0.25"/><rect x="404" y="254" width="2" height="4" fill="#1c1c1c" opacity="0.41"/><rect x="388" y="324" width="2" height="2" fill="#1c1c1c" opacity="0.24"/><rect x="468" y="230" width="2" height="2" fill="#484848" opacity="0.47"/><rect x="406" y="234" width="2" height="2" fill="#1c1c1c" opacity="0.30"/><rect x="470" y="238" width="2" height="2" fill="#1c1c1c" opacity="0.35"/><rect x="548" y="224" width="2" height="2" fill="#1c1c1c" opacity="0.26"/><rect x="454" y="214" width="2" height="2" fill="#1c1c1c" opacity="0.39"/><rect x="526" y="220" width="2" height="2" fill="#1c1c1c" opacity="0.29"/><rect x="532" y="250" width="2" height="2" fill="#1c1c1c" opacity="0.39"/><rect x="522" y="228" width="2" height="4" fill="#1c1c1c" opacity="0.38"/><rect x="362" y="322" width="2" height="2" fill="#484848" opacity="0.42"/><rect x="510" y="248" width="2" height="2" fill="#1c1c1c" opacity="0.45"/><rect x="480" y="218" width="2" height="2" fill="#1c1c1c" opacity="0.31"/><rect x="528" y="248" width="2" height="2" fill="#484848" opacity="0.25"/><rect x="576" y="248" width="2" height="2" fill="#1c1c1c" opacity="0.54"/><rect x="506" y="216" width="2" height="2" fill="#1c1c1c" opacity="0.51"/><rect x="482" y="244" width="2" height="2" fill="#1c1c1c" opacity="0.40"/><rect x="580" y="270" width="2" height="2" fill="#1c1c1c" opacity="0.32"/><rect x="514" y="228" width="2" height="2" fill="#1c1c1c" opacity="0.33"/><rect x="502" y="234" width="2" height="2" fill="#484848" opacity="0.41"/><rect x="502" y="242" width="2" height="2" fill="#1c1c1c" opacity="0.29"/><rect x="550" y="252" width="2" height="2" fill="#1c1c1c" opacity="0.54"/><rect x="410" y="256" width="2" height="2" fill="#1c1c1c" opacity="0.46"/><rect x="468" y="234" width="2" height="2" fill="#1c1c1c" opacity="0.29"/><rect x="448" y="250" width="2" height="4" fill="#1c1c1c" opacity="0.40"/><rect x="490" y="212" width="2" height="2" fill="#1c1c1c" opacity="0.29"/><rect x="386" y="306" width="2" height="2" fill="#1c1c1c" opacity="0.47"/><rect x="558" y="268" width="2" height="4" fill="#1c1c1c" opacity="0.52"/><rect x="494" y="238" width="2" height="2" fill="#484848" opacity="0.48"/><rect x="526" y="252" width="2" height="2" fill="#1c1c1c" opacity="0.35"/><rect x="394" y="284" width="2" height="2" fill="#1c1c1c" opacity="0.23"/><rect x="526" y="242" width="2" height="2" fill="#484848" opacity="0.46"/><rect x="524" y="240" width="2" height="2" fill="#484848" opacity="0.43"/><rect x="362" y="304" width="2" height="4" fill="#1c1c1c" opacity="0.45"/><rect x="584" y="310" width="2" height="4" fill="#1c1c1c" opacity="0.35"/><rect x="394" y="304" width="2" height="2" fill="#1c1c1c" opacity="0.32"/><rect x="540" y="220" width="2" height="2" fill="#1c1c1c" opacity="0.31"/><rect x="556" y="262" width="2" height="4" fill="#1c1c1c" opacity="0.20"/><rect x="470" y="216" width="2" height="2" fill="#1c1c1c" opacity="0.45"/><rect x="464" y="218" width="2" height="2" fill="#484848" opacity="0.31"/><rect x="578" y="300" width="2" height="2" fill="#484848" opacity="0.48"/><rect x="418" y="228" width="2" height="2" fill="#484848" opacity="0.33"/><rect x="420" y="234" width="2" height="4" fill="#1c1c1c" opacity="0.31"/><rect x="408" y="254" width="2" height="2" fill="#1c1c1c" opacity="0.34"/><rect x="412" y="234" width="2" height="2" fill="#1c1c1c" opacity="0.60"/><rect x="380" y="262" width="2" height="4" fill="#1c1c1c" opacity="0.40"/><rect x="438" y="258" width="2" height="4" fill="#1c1c1c" opacity="0.55"/><rect x="592" y="310" width="2" height="4" fill="#1c1c1c" opacity="0.30"/><rect x="444" y="240" width="2" height="2" fill="#1c1c1c" opacity="0.33"/><rect x="398" y="248" width="2" height="4" fill="#484848" opacity="0.46"/><rect x="552" y="262" width="2" height="2" fill="#1c1c1c" opacity="0.29"/><rect x="566" y="282" width="2" height="2" fill="#1c1c1c" opacity="0.31"/><rect x="554" y="258" width="2" height="4" fill="#1c1c1c" opacity="0.57"/><rect x="386" y="324" width="2" height="2" fill="#1c1c1c" opacity="0.55"/><rect x="574" y="272" width="2" height="2" fill="#1c1c1c" opacity="0.36"/><rect x="366" y="290" width="2" height="2" fill="#484848" opacity="0.35"/><rect x="554" y="234" width="2" height="2" fill="#484848" opacity="0.29"/><rect x="418" y="252" width="2" height="4" fill="#1c1c1c" opacity="0.47"/><rect x="568" y="268" width="2" height="4" fill="#484848" opacity="0.27"/><rect x="564" y="256" width="2" height="2" fill="#1c1c1c" opacity="0.55"/><rect x="562" y="250" width="2" height="4" fill="#1c1c1c" opacity="0.31"/><rect x="570" y="260" width="2" height="2" fill="#1c1c1c" opacity="0.42"/><rect x="572" y="290" width="2" height="2" fill="#1c1c1c" opacity="0.20"/><rect x="534" y="252" width="2" height="4" fill="#1c1c1c" opacity="0.39"/><rect x="518" y="220" width="2" height="2" fill="#1c1c1c" opacity="0.29"/><rect x="444" y="222" width="2" height="2" fill="#1c1c1c" opacity="0.58"/><rect x="368" y="274" width="2" height="2" fill="#1c1c1c" opacity="0.27"/><rect x="592" y="320" width="2" height="2" fill="#1c1c1c" opacity="0.31"/><rect x="396" y="298" width="2" height="2" fill="#1c1c1c" opacity="0.52"/><rect x="392" y="258" width="2" height="2" fill="#1c1c1c" opacity="0.57"/><rect x="494" y="216" width="2" height="2" fill="#1c1c1c" opacity="0.20"/><rect x="392" y="416" width="2" height="2" fill="#1c1c1c" opacity="0.52"/><rect x="444" y="462" width="2" height="2" fill="#1c1c1c" opacity="0.23"/><rect x="536" y="458" width="2" height="2" fill="#1c1c1c" opacity="0.50"/><rect x="398" y="440" width="2" height="2" fill="#1c1c1c" opacity="0.27"/><rect x="390" y="404" width="2" height="4" fill="#1c1c1c" opacity="0.21"/><rect x="458" y="448" width="2" height="2" fill="#1c1c1c" opacity="0.21"/><rect x="404" y="418" width="2" height="2" fill="#1c1c1c" opacity="0.37"/><rect x="456" y="468" width="2" height="2" fill="#1c1c1c" opacity="0.23"/><rect x="448" y="472" width="2" height="2" fill="#484848" opacity="0.41"/><rect x="360" y="386" width="2" height="2" fill="#1c1c1c" opacity="0.28"/><rect x="528" y="470" width="2" height="4" fill="#484848" opacity="0.40"/><rect x="506" y="452" width="2" height="4" fill="#484848" opacity="0.37"/><rect x="476" y="474" width="2" height="4" fill="#1c1c1c" opacity="0.44"/><rect x="510" y="464" width="2" height="4" fill="#1c1c1c" opacity="0.38"/><rect x="518" y="464" width="2" height="2" fill="#484848" opacity="0.41"/><rect x="436" y="448" width="2" height="2" fill="#1c1c1c" opacity="0.49"/><rect x="580" y="410" width="2" height="4" fill="#484848" opacity="0.24"/><rect x="388" y="438" width="2" height="2" fill="#1c1c1c" opacity="0.53"/><rect x="574" y="432" width="2" height="2" fill="#484848" opacity="0.27"/><rect x="374" y="390" width="2" height="2" fill="#1c1c1c" opacity="0.38"/><rect x="500" y="476" width="2" height="2" fill="#1c1c1c" opacity="0.58"/><rect x="416" y="430" width="2" height="4" fill="#1c1c1c" opacity="0.55"/><rect x="376" y="400" width="2" height="2" fill="#1c1c1c" opacity="0.52"/><rect x="392" y="418" width="2" height="2" fill="#1c1c1c" opacity="0.57"/><rect x="424" y="446" width="2" height="2" fill="#1c1c1c" opacity="0.54"/><rect x="528" y="472" width="2" height="2" fill="#1c1c1c" opacity="0.41"/><rect x="424" y="464" width="2" height="4" fill="#484848" opacity="0.35"/><rect x="582" y="432" width="2" height="2" fill="#484848" opacity="0.46"/><rect x="408" y="428" width="2" height="2" fill="#1c1c1c" opacity="0.48"/><rect x="478" y="454" width="2" height="2" fill="#1c1c1c" opacity="0.44"/><rect x="446" y="448" width="2" height="2" fill="#484848" opacity="0.49"/><rect x="446" y="452" width="2" height="2" fill="#1c1c1c" opacity="0.23"/><rect x="418" y="442" width="2" height="2" fill="#1c1c1c" opacity="0.38"/><rect x="490" y="478" width="2" height="4" fill="#1c1c1c" opacity="0.29"/><rect x="510" y="456" width="2" height="2" fill="#484848" opacity="0.58"/><rect x="372" y="404" width="2" height="4" fill="#1c1c1c" opacity="0.36"/><rect x="562" y="446" width="2" height="2" fill="#1c1c1c" opacity="0.35"/><rect x="434" y="456" width="2" height="2" fill="#1c1c1c" opacity="0.32"/><rect x="550" y="456" width="2" height="4" fill="#1c1c1c" opacity="0.35"/><rect x="520" y="472" width="2" height="2" fill="#1c1c1c" opacity="0.34"/><rect x="586" y="434" width="2" height="2" fill="#1c1c1c" opacity="0.38"/><rect x="396" y="440" width="2" height="2" fill="#1c1c1c" opacity="0.49"/><rect x="538" y="450" width="2" height="2" fill="#484848" opacity="0.47"/><rect x="400" y="414" width="2" height="2" fill="#1c1c1c" opacity="0.39"/><rect x="530" y="444" width="2" height="2" fill="#1c1c1c" opacity="0.60"/><rect x="452" y="470" width="2" height="2" fill="#1c1c1c" opacity="0.60"/><rect x="376" y="398" width="2" height="2" fill="#1c1c1c" opacity="0.41"/><rect x="514" y="462" width="2" height="4" fill="#484848" opacity="0.24"/><rect x="562" y="422" width="2" height="2" fill="#484848" opacity="0.47"/><rect x="590" y="412" width="2" height="2" fill="#1c1c1c" opacity="0.54"/><rect x="372" y="386" width="2" height="2" fill="#1c1c1c" opacity="0.51"/><rect x="366" y="414" width="2" height="2" fill="#1c1c1c" opacity="0.43"/><rect x="394" y="408" width="2" height="2" fill="#1c1c1c" opacity="0.34"/><rect x="410" y="444" width="2" height="2" fill="#1c1c1c" opacity="0.44"/><rect x="402" y="418" width="2" height="2" fill="#1c1c1c" opacity="0.52"/><rect x="488" y="454" width="2" height="2" fill="#1c1c1c" opacity="0.36"/><rect x="526" y="470" width="2" height="4" fill="#484848" opacity="0.53"/><rect x="400" y="444" width="2" height="4" fill="#1c1c1c" opacity="0.26"/><rect x="496" y="450" width="2" height="2" fill="#1c1c1c" opacity="0.56"/><rect x="502" y="472" width="2" height="4" fill="#1c1c1c" opacity="0.37"/><rect x="382" y="400" width="2" height="4" fill="#1c1c1c" opacity="0.33"/><rect x="484" y="470" width="2" height="2" fill="#484848" opacity="0.43"/><rect x="488" y="476" width="2" height="2" fill="#1c1c1c" opacity="0.31"/><rect x="516" y="454" width="2" height="4" fill="#1c1c1c" opacity="0.35"/><rect x="532" y="452" width="2" height="2" fill="#1c1c1c" opacity="0.53"/><rect x="372" y="398" width="2" height="4" fill="#1c1c1c" opacity="0.53"/><rect x="544" y="460" width="2" height="2" fill="#1c1c1c" opacity="0.39"/><rect x="402" y="444" width="2" height="2" fill="#1c1c1c" opacity="0.35"/><rect x="514" y="450" width="2" height="2" fill="#1c1c1c" opacity="0.58"/><rect x="444" y="460" width="2" height="2" fill="#1c1c1c" opacity="0.28"/><rect x="556" y="428" width="2" height="2" fill="#1c1c1c" opacity="0.41"/><rect x="554" y="430" width="2" height="2" fill="#1c1c1c" opacity="0.44"/><rect x="586" y="440" width="2" height="2" fill="#1c1c1c" opacity="0.36"/><rect x="418" y="452" width="2" height="2" fill="#1c1c1c" opacity="0.53"/><rect x="436" y="448" width="2" height="2" fill="#484848" opacity="0.46"/><rect x="366" y="400" width="2" height="2" fill="#1c1c1c" opacity="0.42"/><rect x="564" y="444" width="2" height="4" fill="#1c1c1c" opacity="0.37"/><rect x="550" y="466" width="2" height="2" fill="#484848" opacity="0.27"/><rect x="372" y="406" width="2" height="4" fill="#1c1c1c" opacity="0.47"/><rect x="574" y="430" width="2" height="2" fill="#484848" opacity="0.53"/><rect x="586" y="430" width="2" height="4" fill="#1c1c1c" opacity="0.32"/><rect x="590" y="398" width="2" height="2" fill="#1c1c1c" opacity="0.54"/><rect x="374" y="420" width="2" height="2" fill="#1c1c1c" opacity="0.56"/><rect x="592" y="396" width="2" height="4" fill="#1c1c1c" opacity="0.40"/><rect x="544" y="448" width="2" height="2" fill="#1c1c1c" opacity="0.42"/><rect x="592" y="424" width="2" height="2" fill="#1c1c1c" opacity="0.34"/><rect x="396" y="422" width="2" height="4" fill="#1c1c1c" opacity="0.38"/><rect x="514" y="460" width="2" height="2" fill="#1c1c1c" opacity="0.39"/><rect x="544" y="444" width="2" height="4" fill="#1c1c1c" opacity="0.43"/><rect x="422" y="432" width="2" height="4" fill="#484848" opacity="0.30"/><rect x="394" y="444" width="2" height="2" fill="#1c1c1c" opacity="0.59"/><rect x="484" y="456" width="2" height="2" fill="#1c1c1c" opacity="0.47"/><rect x="488" y="454" width="2" height="2" fill="#484848" opacity="0.43"/><rect x="502" y="460" width="2" height="2" fill="#1c1c1c" opacity="0.52"/><rect x="372" y="412" width="2" height="2" fill="#1c1c1c" opacity="0.54"/><rect x="556" y="440" width="2" height="2" fill="#1c1c1c" opacity="0.43"/><rect x="544" y="448" width="2" height="2" fill="#484848" opacity="0.44"/><rect x="592" y="434" width="2" height="2" fill="#1c1c1c" opacity="0.21"/><rect x="498" y="458" width="2" height="2" fill="#1c1c1c" opacity="0.42"/><rect x="422" y="434" width="2" height="2" fill="#1c1c1c" opacity="0.58"/><rect x="392" y="420" width="2" height="2" fill="#484848" opacity="0.44"/><rect x="502" y="472" width="2" height="2" fill="#1c1c1c" opacity="0.32"/><rect x="462" y="472" width="2" height="2" fill="#1c1c1c" opacity="0.39"/><rect x="542" y="448" width="2" height="2" fill="#1c1c1c" opacity="0.43"/><rect x="442" y="448" width="2" height="2" fill="#484848" opacity="0.43"/><rect x="434" y="438" width="2" height="2" fill="#484848" opacity="0.28"/><rect x="446" y="454" width="2" height="2" fill="#1c1c1c" opacity="0.26"/><rect x="462" y="452" width="2" height="2" fill="#484848" opacity="0.37"/><rect x="536" y="442" width="2" height="4" fill="#1c1c1c" opacity="0.57"/><rect x="580" y="406" width="2" height="2" fill="#1c1c1c" opacity="0.23"/><rect x="482" y="466" width="2" height="2" fill="#484848" opacity="0.25"/><rect x="428" y="446" width="2" height="2" fill="#1c1c1c" opacity="0.59"/><rect x="368" y="386" width="2" height="2" fill="#1c1c1c" opacity="0.57"/><rect x="376" y="406" width="2" height="2" fill="#484848" opacity="0.24"/><rect x="428" y="444" width="2" height="4" fill="#484848" opacity="0.21"/><rect x="586" y="430" width="2" height="2" fill="#1c1c1c" opacity="0.20"/><rect x="366" y="404" width="2" height="2" fill="#484848" opacity="0.36"/><rect x="438" y="450" width="2" height="2" fill="#1c1c1c" opacity="0.30"/><rect x="514" y="462" width="2" height="2" fill="#1c1c1c" opacity="0.38"/><rect x="400" y="448" width="2" height="2" fill="#1c1c1c" opacity="0.28"/><rect x="472" y="456" width="2" height="2" fill="#484848" opacity="0.30"/><rect x="532" y="450" width="2" height="2" fill="#1c1c1c" opacity="0.43"/><rect x="374" y="386" width="2" height="2" fill="#1c1c1c" opacity="0.50"/><rect x="410" y="422" width="2" height="2" fill="#1c1c1c" opacity="0.23"/><rect x="560" y="434" width="2" height="4" fill="#1c1c1c" opacity="0.42"/><rect x="382" y="420" width="2" height="2" fill="#1c1c1c" opacity="0.60"/><rect x="454" y="450" width="2" height="2" fill="#1c1c1c" opacity="0.34"/><rect x="570" y="432" width="2" height="2" fill="#1c1c1c" opacity="0.39"/><rect x="568" y="418" width="2" height="4" fill="#1c1c1c" opacity="0.58"/><rect x="466" y="452" width="2" height="2" fill="#1c1c1c" opacity="0.55"/><rect x="432" y="468" width="2" height="2" fill="#1c1c1c" opacity="0.58"/><rect x="406" y="422" width="2" height="4" fill="#1c1c1c" opacity="0.35"/><rect x="562" y="456" width="2" height="2" fill="#1c1c1c" opacity="0.59"/><rect x="558" y="450" width="2" height="2" fill="#1c1c1c" opacity="0.27"/><rect x="558" y="276" width="2" height="4" fill="#1c1c1c" opacity="0.50"/><rect x="378" y="360" width="2" height="2" fill="#1c1c1c" opacity="0.21"/><rect x="586" y="394" width="2" height="2" fill="#484848" opacity="0.26"/><rect x="438" y="258" width="2" height="4" fill="#1c1c1c" opacity="0.34"/><rect x="586" y="344" width="2" height="2" fill="#1c1c1c" opacity="0.58"/><rect x="574" y="354" width="2" height="4" fill="#1c1c1c" opacity="0.42"/><rect x="470" y="260" width="2" height="2" fill="#1c1c1c" opacity="0.58"/><rect x="584" y="328" width="2" height="2" fill="#484848" opacity="0.39"/><rect x="522" y="266" width="2" height="2" fill="#1c1c1c" opacity="0.33"/><rect x="546" y="422" width="2" height="2" fill="#1c1c1c" opacity="0.45"/><rect x="448" y="260" width="2" height="4" fill="#484848" opacity="0.37"/><rect x="408" y="390" width="2" height="4" fill="#484848" opacity="0.29"/><rect x="586" y="384" width="2" height="2" fill="#484848" opacity="0.39"/><rect x="386" y="382" width="2" height="2" fill="#1c1c1c" opacity="0.29"/><rect x="408" y="386" width="2" height="2" fill="#484848" opacity="0.46"/><rect x="430" y="404" width="2" height="2" fill="#1c1c1c" opacity="0.40"/><rect x="576" y="388" width="2" height="2" fill="#1c1c1c" opacity="0.47"/><rect x="406" y="288" width="2" height="4" fill="#484848" opacity="0.22"/><rect x="444" y="254" width="2" height="2" fill="#1c1c1c" opacity="0.59"/><rect x="468" y="250" width="2" height="2" fill="#1c1c1c" opacity="0.29"/><rect x="538" y="432" width="2" height="2" fill="#1c1c1c" opacity="0.37"/><rect x="382" y="378" width="2" height="4" fill="#1c1c1c" opacity="0.26"/><rect x="446" y="252" width="2" height="2" fill="#1c1c1c" opacity="0.46"/><rect x="450" y="430" width="2" height="2" fill="#1c1c1c" opacity="0.47"/><rect x="518" y="438" width="2" height="2" fill="#484848" opacity="0.25"/><rect x="384" y="328" width="2" height="2" fill="#1c1c1c" opacity="0.58"/><rect x="434" y="422" width="2" height="4" fill="#1c1c1c" opacity="0.57"/><rect x="432" y="410" width="2" height="2" fill="#1c1c1c" opacity="0.30"/><rect x="464" y="254" width="2" height="2" fill="#1c1c1c" opacity="0.59"/><rect x="422" y="404" width="2" height="2" fill="#1c1c1c" opacity="0.37"/><rect x="406" y="292" width="2" height="2" fill="#1c1c1c" opacity="0.43"/><rect x="584" y="378" width="2" height="4" fill="#1c1c1c" opacity="0.48"/><rect x="592" y="318" width="2" height="2" fill="#1c1c1c" opacity="0.29"/><rect x="420" y="402" width="2" height="4" fill="#1c1c1c" opacity="0.33"/><rect x="474" y="256" width="2" height="2" fill="#1c1c1c" opacity="0.33"/><rect x="586" y="390" width="2" height="2" fill="#1c1c1c" opacity="0.59"/><rect x="502" y="434" width="2" height="4" fill="#1c1c1c" opacity="0.23"/><rect x="572" y="286" width="2" height="2" fill="#1c1c1c" opacity="0.32"/><rect x="574" y="380" width="2" height="4" fill="#1c1c1c" opacity="0.23"/><rect x="578" y="314" width="2" height="4" fill="#1c1c1c" opacity="0.29"/><rect x="580" y="392" width="2" height="2" fill="#484848" opacity="0.25"/><rect x="392" y="302" width="2" height="2" fill="#1c1c1c" opacity="0.43"/><rect x="410" y="302" width="2" height="2" fill="#1c1c1c" opacity="0.51"/><rect x="572" y="312" width="2" height="2" fill="#1c1c1c" opacity="0.51"/><rect x="392" y="396" width="2" height="2" fill="#1c1c1c" opacity="0.48"/><rect x="392" y="318" width="2" height="4" fill="#1c1c1c" opacity="0.28"/><rect x="486" y="238" width="2" height="2" fill="#1c1c1c" opacity="0.31"/><rect x="454" y="430" width="2" height="4" fill="#1c1c1c" opacity="0.40"/><rect x="508" y="430" width="2" height="2" fill="#484848" opacity="0.47"/><rect x="422" y="398" width="2" height="2" fill="#1c1c1c" opacity="0.30"/><rect x="358" y="160" width="238" height="358" fill="url(#mh)"/><rect x="358" y="160" width="238" height="358" fill="url(#mg)"/></g><path d="M362.5 518 v-11.5 M368.5 518 v-6 M374.5 518 v-6 M380.5 518 v-6 M386.5 518 v-6 M391.5 518 v-11.5 M397.5 518 v-6 M403.5 518 v-6 M409.5 518 v-6 M415.5 518 v-6 M421.5 518 v-11.5 M426.5 518 v-6 M432.5 518 v-6 M438.5 518 v-6 M444.5 518 v-6 M450.5 518 v-11.5 M456.5 518 v-6 M461.5 518 v-6 M467.5 518 v-6 M473.5 518 v-6 M479.5 518 v-11.5 M485.5 518 v-6 M491.5 518 v-6 M497.5 518 v-6 M502.5 518 v-6 M508.5 518 v-11.5 M514.5 518 v-6 M520.5 518 v-6 M526.5 518 v-6 M532.5 518 v-6 M537.5 518 v-11.5 M543.5 518 v-6 M549.5 518 v-6 M555.5 518 v-6 M561.5 518 v-6 M567.5 518 v-11.5 M572.5 518 v-6 M578.5 518 v-6 M584.5 518 v-6 M590.5 518 v-6 M358 511.5 h4.5 M358 499.5 h4.5 M358 486.5 h4.5 M358 474.5 h4.5 M358 462.5 h8 M358 450.5 h4.5 M358 437.5 h4.5 M358 425.5 h4.5 M358 413.5 h4.5 M358 400.5 h8 M358 388.5 h4.5 M358 376.5 h4.5 M358 363.5 h4.5 M358 351.5 h4.5 M358 339.5 h8 M358 326.5 h4.5 M358 314.5 h4.5 M358 302.5 h4.5 M358 290.5 h4.5 M358 277.5 h8 M358 265.5 h4.5 M358 253.5 h4.5 M358 240.5 h4.5 M358 228.5 h4.5 M358 216.5 h8 M358 204.5 h4.5 M358 191.5 h4.5 M358 179.5 h4.5 M358 167.5 h4.5" stroke="#000" stroke-width="1" fill="none" shape-rendering="crispEdges"/><path d="M358.5 160 V518 M358 517.5 H596" stroke="#000" stroke-width="1" fill="none" shape-rendering="crispEdges"/><rect x="479" y="159" width="1" height="360" fill="#ffff00"/><rect x="358" y="339" width="238" height="1" fill="#ffff00"/><text x="362.0" y="539.6" font-size="10.5" text-anchor="middle">-20</text><text x="391.2" y="539.6" font-size="10.5" text-anchor="middle">-15</text><text x="420.4" y="539.6" font-size="10.5" text-anchor="middle">-10</text><text x="449.6" y="539.6" font-size="10.5" text-anchor="middle">-5</text><text x="478.8" y="539.6" font-size="10.5" text-anchor="middle">0</text><text x="508.0" y="539.6" font-size="10.5" text-anchor="middle">5</text><text x="537.2" y="539.6" font-size="10.5" text-anchor="middle">10</text><text x="566.4" y="539.6" font-size="10.5" text-anchor="middle">15</text><text x="355.1" y="219.3" font-size="10.5" text-anchor="end">20</text><text x="355.1" y="280.8" font-size="10.5" text-anchor="end">10</text><text x="355.1" y="342.3" font-size="10.5" text-anchor="end">0</text><text x="355.1" y="403.8" font-size="10.5" text-anchor="end">-10</text><text x="355.1" y="465.3" font-size="10.5" text-anchor="end">-20</text><text x="595" y="548.5" font-size="11" font-weight="bold" text-anchor="end">X pos. (mm)</text><text transform="translate(341.7,161) rotate(-90)" font-size="11" font-weight="bold" text-anchor="end">Y pos. (mm)</text></svg>
<svg style="left:639px;top:116px" width="296" height="218" viewBox="639 116 296 218"><rect x="639" y="116" width="296" height="218" fill="#fff"/><rect x="668.5" y="137.5" width="237" height="175.0" fill="#fff" stroke="#000" stroke-width="1"/><path d="M668.5 312.5 h4 M668.5 306.5 h4 M668.5 301.5 h7 M668.5 296.5 h4 M668.5 291.5 h4 M668.5 286.5 h4 M668.5 281.5 h4 M668.5 275.5 h7 M668.5 270.5 h4 M668.5 265.5 h4 M668.5 260.5 h4 M668.5 255.5 h4 M668.5 249.5 h7 M668.5 244.5 h4 M668.5 239.5 h4 M668.5 234.5 h4 M668.5 229.5 h4 M668.5 223.5 h7 M668.5 218.5 h4 M668.5 213.5 h4 M668.5 208.5 h4 M668.5 203.5 h4 M668.5 198.5 h7 M668.5 192.5 h4 M668.5 187.5 h4 M668.5 182.5 h4 M668.5 177.5 h4 M668.5 172.5 h7 M668.5 166.5 h4 M668.5 161.5 h4 M668.5 156.5 h4 M668.5 151.5 h4 M668.5 146.5 h7 M668.5 140.5 h4 M671.5 312.5 v-3.5 M677.5 312.5 v-3.5 M683.5 312.5 v-3.5 M689.5 312.5 v-3.5 M695.5 312.5 v-6.5 M701.5 312.5 v-3.5 M707.5 312.5 v-3.5 M713.5 312.5 v-3.5 M719.5 312.5 v-3.5 M725.5 312.5 v-6.5 M731.5 312.5 v-3.5 M738.5 312.5 v-3.5 M744.5 312.5 v-3.5 M750.5 312.5 v-3.5 M756.5 312.5 v-6.5 M762.5 312.5 v-3.5 M768.5 312.5 v-3.5 M774.5 312.5 v-3.5 M780.5 312.5 v-3.5 M786.5 312.5 v-6.5 M792.5 312.5 v-3.5 M798.5 312.5 v-3.5 M804.5 312.5 v-3.5 M811.5 312.5 v-3.5 M817.5 312.5 v-6.5 M823.5 312.5 v-3.5 M829.5 312.5 v-3.5 M835.5 312.5 v-3.5 M841.5 312.5 v-3.5 M847.5 312.5 v-6.5 M853.5 312.5 v-3.5 M859.5 312.5 v-3.5 M865.5 312.5 v-3.5 M871.5 312.5 v-3.5 M877.5 312.5 v-6.5 M883.5 312.5 v-3.5 M890.5 312.5 v-3.5 M896.5 312.5 v-3.5 M902.5 312.5 v-3.5" stroke="#000" stroke-width="1" fill="none" shape-rendering="crispEdges"/><text x="665" y="304.2" font-size="8" text-anchor="end">0</text><text x="665" y="278.2" font-size="8" text-anchor="end">5000</text><text x="665" y="252.3" font-size="8" text-anchor="end">10000</text><text x="665" y="226.3" font-size="8" text-anchor="end">15000</text><text x="665" y="200.4" font-size="8" text-anchor="end">20000</text><text x="665" y="174.5" font-size="8" text-anchor="end">25000</text><text x="665" y="148.5" font-size="8" text-anchor="end">30000</text><text x="694.2" y="323.3" font-size="8" text-anchor="middle">-15</text><text x="724.6" y="323.3" font-size="8" text-anchor="middle">-10</text><text x="755.0" y="323.3" font-size="8" text-anchor="middle">-5</text><text x="785.4" y="323.3" font-size="8" text-anchor="middle">0</text><text x="815.8" y="323.3" font-size="8" text-anchor="middle">5</text><text x="846.2" y="323.3" font-size="8" text-anchor="middle">10</text><text x="876.6" y="323.3" font-size="8" text-anchor="middle">15</text><text x="903.8" y="327.7" font-size="8" font-weight="bold" text-anchor="end">X pos. (mm)</text><g fill="#000"><rect x="668.3" y="302.5" width="1.3" height="1.8"/><rect x="669.4" y="302.9" width="1.3" height="2.4"/><rect x="670.5" y="303.8" width="1.3" height="1.8"/><rect x="671.6" y="295.3" width="1.3" height="4.0"/><rect x="672.7" y="300.6" width="1.3" height="1.8"/><rect x="673.8" y="301.8" width="1.3" height="2.4"/><rect x="674.9" y="301.5" width="1.3" height="2.4"/><rect x="676.0" y="299.6" width="1.3" height="4.0"/><rect x="677.1" y="299.7" width="1.3" height="1.8"/><rect x="678.2" y="297.9" width="1.3" height="2.4"/><rect x="679.3" y="300.8" width="1.3" height="2.4"/><rect x="680.4" y="300.3" width="1.3" height="2.4"/><rect x="681.5" y="293.9" width="1.3" height="2.4"/><rect x="682.6" y="300.1" width="1.3" height="3.2"/><rect x="683.7" y="299.1" width="1.3" height="2.4"/><rect x="684.8" y="297.6" width="1.3" height="1.8"/><rect x="685.9" y="301.8" width="1.3" height="1.8"/><rect x="687.0" y="294.6" width="1.3" height="4.0"/><rect x="688.1" y="300.0" width="1.3" height="4.0"/><rect x="689.2" y="300.4" width="1.3" height="1.8"/><rect x="690.3" y="299.2" width="1.3" height="4.0"/><rect x="691.4" y="298.5" width="1.3" height="3.2"/><rect x="692.5" y="295.3" width="1.3" height="4.0"/><rect x="693.6" y="298.8" width="1.3" height="2.4"/><rect x="694.7" y="297.2" width="1.3" height="4.0"/><rect x="695.8" y="297.0" width="1.3" height="3.2"/><rect x="696.9" y="299.8" width="1.3" height="3.2"/><rect x="698.0" y="299.9" width="1.3" height="1.8"/><rect x="699.1" y="295.9" width="1.3" height="3.2"/><rect x="700.2" y="300.3" width="1.3" height="1.8"/><rect x="701.3" y="296.9" width="1.3" height="2.4"/><rect x="702.4" y="301.4" width="1.3" height="3.2"/><rect x="703.5" y="298.9" width="1.3" height="1.8"/><rect x="704.6" y="296.1" width="1.3" height="4.0"/><rect x="705.7" y="297.2" width="1.3" height="3.2"/><rect x="706.8" y="299.6" width="1.3" height="4.0"/><rect x="707.9" y="293.1" width="1.3" height="1.8"/><rect x="709.0" y="299.7" width="1.3" height="2.4"/><rect x="710.1" y="294.7" width="1.3" height="2.4"/><rect x="711.2" y="300.5" width="1.3" height="1.8"/><rect x="712.3" y="295.2" width="1.3" height="1.8"/><rect x="713.4" y="297.4" width="1.3" height="4.0"/><rect x="714.5" y="297.7" width="1.3" height="2.4"/><rect x="715.6" y="295.4" width="1.3" height="4.0"/><rect x="716.7" y="296.8" width="1.3" height="3.2"/><rect x="717.8" y="292.5" width="1.3" height="2.4"/><rect x="718.9" y="291.4" width="1.3" height="2.4"/><rect x="720.0" y="295.2" width="1.3" height="3.2"/><rect x="721.1" y="290.1" width="1.3" height="3.2"/><rect x="722.2" y="290.2" width="1.3" height="3.2"/><rect x="723.3" y="294.2" width="1.3" height="3.2"/><rect x="724.4" y="287.4" width="1.3" height="3.2"/><rect x="725.5" y="290.7" width="1.3" height="3.2"/><rect x="726.6" y="289.1" width="1.3" height="2.4"/><rect x="727.7" y="287.2" width="1.3" height="3.2"/><rect x="728.8" y="286.3" width="1.3" height="3.2"/><rect x="729.9" y="283.6" width="1.3" height="3.2"/><rect x="731.0" y="283.9" width="1.3" height="4.0"/><rect x="732.1" y="280.1" width="1.3" height="3.2"/><rect x="733.2" y="279.0" width="1.3" height="4.0"/><rect x="734.3" y="278.9" width="1.3" height="3.2"/><rect x="735.4" y="275.6" width="1.3" height="2.4"/><rect x="736.5" y="275.8" width="1.3" height="2.4"/><rect x="737.6" y="271.0" width="1.3" height="4.0"/><rect x="738.7" y="273.7" width="1.3" height="3.2"/><rect x="739.8" y="269.2" width="1.3" height="4.0"/><rect x="740.9" y="269.1" width="1.3" height="2.4"/><rect x="742.0" y="266.3" width="1.3" height="4.0"/><rect x="743.1" y="264.1" width="1.3" height="3.2"/><rect x="744.2" y="261.2" width="1.3" height="3.2"/><rect x="745.3" y="259.3" width="1.3" height="1.8"/><rect x="746.4" y="254.2" width="1.3" height="2.4"/><rect x="747.5" y="250.4" width="1.3" height="2.4"/><rect x="748.6" y="249.6" width="1.3" height="1.8"/><rect x="749.7" y="246.7" width="1.3" height="4.0"/><rect x="750.8" y="243.1" width="1.3" height="2.4"/><rect x="751.9" y="241.5" width="1.3" height="1.8"/><rect x="753.0" y="238.6" width="1.3" height="2.4"/><rect x="754.1" y="235.0" width="1.3" height="1.8"/><rect x="755.2" y="234.0" width="1.3" height="1.8"/><rect x="756.3" y="229.3" width="1.3" height="2.4"/><rect x="757.4" y="227.2" width="1.3" height="1.8"/><rect x="758.5" y="221.2" width="1.3" height="3.2"/><rect x="759.6" y="222.0" width="1.3" height="4.0"/><rect x="760.7" y="219.1" width="1.3" height="1.8"/><rect x="761.8" y="217.9" width="1.3" height="1.8"/><rect x="762.9" y="215.8" width="1.3" height="3.2"/><rect x="764.0" y="210.7" width="1.3" height="3.2"/><rect x="765.1" y="209.1" width="1.3" height="3.2"/><rect x="766.2" y="205.3" width="1.3" height="4.0"/><rect x="767.3" y="206.6" width="1.3" height="4.0"/><rect x="768.4" y="204.0" width="1.3" height="3.2"/><rect x="769.5" y="204.8" width="1.3" height="4.0"/><rect x="770.6" y="200.6" width="1.3" height="4.0"/><rect x="771.7" y="200.2" width="1.3" height="2.4"/><rect x="772.8" y="198.5" width="1.3" height="3.2"/><rect x="773.9" y="200.8" width="1.3" height="1.8"/><rect x="775.0" y="200.6" width="1.3" height="2.4"/><rect x="776.1" y="198.4" width="1.3" height="3.2"/><rect x="777.2" y="200.8" width="1.3" height="4.0"/><rect x="778.3" y="201.1" width="1.3" height="4.0"/><rect x="779.4" y="200.7" width="1.3" height="3.2"/><rect x="780.5" y="199.7" width="1.3" height="4.0"/><rect x="781.6" y="200.3" width="1.3" height="2.4"/><rect x="782.7" y="202.4" width="1.3" height="3.2"/><rect x="783.8" y="203.4" width="1.3" height="3.2"/><rect x="784.9" y="205.3" width="1.3" height="4.0"/><rect x="786.0" y="202.7" width="1.3" height="3.2"/><rect x="787.1" y="206.6" width="1.3" height="4.0"/><rect x="788.2" y="208.9" width="1.3" height="1.8"/><rect x="789.3" y="211.4" width="1.3" height="1.8"/><rect x="790.4" y="214.1" width="1.3" height="2.4"/><rect x="791.5" y="216.2" width="1.3" height="3.2"/><rect x="792.6" y="213.5" width="1.3" height="4.0"/><rect x="793.7" y="216.6" width="1.3" height="1.8"/><rect x="794.8" y="219.8" width="1.3" height="2.4"/><rect x="795.9" y="219.0" width="1.3" height="4.0"/><rect x="797.0" y="221.8" width="1.3" height="3.2"/><rect x="798.1" y="226.1" width="1.3" height="2.4"/><rect x="799.2" y="227.6" width="1.3" height="4.0"/><rect x="800.3" y="231.9" width="1.3" height="4.0"/><rect x="801.4" y="238.1" width="1.3" height="1.8"/><rect x="802.5" y="239.3" width="1.3" height="1.8"/><rect x="803.6" y="241.6" width="1.3" height="3.2"/><rect x="804.7" y="246.1" width="1.3" height="3.2"/><rect x="805.8" y="248.1" width="1.3" height="3.2"/><rect x="806.9" y="251.2" width="1.3" height="3.2"/><rect x="808.0" y="255.0" width="1.3" height="2.4"/><rect x="809.1" y="259.1" width="1.3" height="1.8"/><rect x="810.2" y="257.7" width="1.3" height="1.8"/><rect x="811.3" y="261.4" width="1.3" height="2.4"/><rect x="812.4" y="260.6" width="1.3" height="4.0"/><rect x="813.5" y="265.0" width="1.3" height="4.0"/><rect x="814.6" y="265.7" width="1.3" height="4.0"/><rect x="815.7" y="271.4" width="1.3" height="4.0"/><rect x="816.8" y="272.6" width="1.3" height="3.2"/><rect x="817.9" y="275.2" width="1.3" height="4.0"/><rect x="819.0" y="275.9" width="1.3" height="1.8"/><rect x="820.1" y="277.2" width="1.3" height="4.0"/><rect x="821.2" y="280.1" width="1.3" height="4.0"/><rect x="822.3" y="281.3" width="1.3" height="3.2"/><rect x="823.4" y="280.4" width="1.3" height="4.0"/><rect x="824.5" y="282.0" width="1.3" height="3.2"/><rect x="825.6" y="285.8" width="1.3" height="1.8"/><rect x="826.7" y="285.7" width="1.3" height="1.8"/><rect x="827.8" y="290.9" width="1.3" height="1.8"/><rect x="828.9" y="286.5" width="1.3" height="1.8"/><rect x="830.0" y="289.6" width="1.3" height="1.8"/><rect x="831.1" y="289.7" width="1.3" height="1.8"/><rect x="832.2" y="291.9" width="1.3" height="3.2"/><rect x="833.3" y="294.3" width="1.3" height="2.4"/><rect x="834.4" y="294.1" width="1.3" height="2.4"/><rect x="835.5" y="292.9" width="1.3" height="1.8"/><rect x="836.6" y="296.7" width="1.3" height="3.2"/><rect x="837.7" y="292.6" width="1.3" height="4.0"/><rect x="838.8" y="295.0" width="1.3" height="4.0"/><rect x="839.9" y="292.7" width="1.3" height="4.0"/><rect x="841.0" y="295.1" width="1.3" height="3.2"/><rect x="842.1" y="296.5" width="1.3" height="3.2"/><rect x="843.2" y="293.5" width="1.3" height="3.2"/><rect x="844.3" y="298.5" width="1.3" height="2.4"/><rect x="845.4" y="293.9" width="1.3" height="3.2"/><rect x="846.5" y="299.1" width="1.3" height="2.4"/><rect x="847.6" y="301.3" width="1.3" height="4.0"/><rect x="848.7" y="299.7" width="1.3" height="1.8"/><rect x="849.8" y="299.2" width="1.3" height="1.8"/><rect x="850.9" y="296.8" width="1.3" height="4.0"/><rect x="852.0" y="292.8" width="1.3" height="4.0"/><rect x="853.1" y="299.1" width="1.3" height="1.8"/><rect x="854.2" y="299.3" width="1.3" height="2.4"/><rect x="855.3" y="299.6" width="1.3" height="2.4"/><rect x="856.4" y="299.0" width="1.3" height="4.0"/><rect x="857.5" y="299.3" width="1.3" height="4.0"/><rect x="858.6" y="297.3" width="1.3" height="3.2"/><rect x="859.7" y="299.8" width="1.3" height="4.0"/><rect x="860.8" y="296.1" width="1.3" height="3.2"/><rect x="861.9" y="301.8" width="1.3" height="4.0"/><rect x="863.0" y="300.1" width="1.3" height="1.8"/><rect x="864.1" y="300.9" width="1.3" height="2.4"/><rect x="865.2" y="298.9" width="1.3" height="1.8"/><rect x="866.3" y="297.1" width="1.3" height="4.0"/><rect x="867.4" y="300.7" width="1.3" height="3.2"/><rect x="868.5" y="298.6" width="1.3" height="4.0"/><rect x="869.6" y="297.0" width="1.3" height="2.4"/><rect x="870.7" y="297.9" width="1.3" height="3.2"/><rect x="871.8" y="302.1" width="1.3" height="4.0"/><rect x="872.9" y="297.6" width="1.3" height="3.2"/><rect x="874.0" y="303.0" width="1.3" height="2.4"/><rect x="875.1" y="298.0" width="1.3" height="3.2"/><rect x="876.2" y="300.8" width="1.3" height="1.8"/><rect x="877.3" y="301.9" width="1.3" height="4.0"/><rect x="878.4" y="300.2" width="1.3" height="3.2"/><rect x="879.5" y="296.1" width="1.3" height="2.4"/><rect x="880.6" y="298.7" width="1.3" height="2.4"/><rect x="881.7" y="301.8" width="1.3" height="3.2"/><rect x="882.8" y="300.4" width="1.3" height="3.2"/><rect x="883.9" y="295.0" width="1.3" height="4.0"/><rect x="885.0" y="298.0" width="1.3" height="2.4"/><rect x="886.1" y="299.9" width="1.3" height="4.0"/><rect x="887.2" y="300.5" width="1.3" height="4.0"/><rect x="888.3" y="297.2" width="1.3" height="4.0"/><rect x="889.4" y="298.5" width="1.3" height="3.2"/><rect x="890.5" y="300.8" width="1.3" height="2.4"/><rect x="891.6" y="300.3" width="1.3" height="4.0"/><rect x="892.7" y="299.2" width="1.3" height="1.8"/><rect x="893.8" y="299.7" width="1.3" height="1.8"/><rect x="894.9" y="296.7" width="1.3" height="3.2"/><rect x="896.0" y="303.2" width="1.3" height="2.4"/><rect x="897.1" y="296.2" width="1.3" height="4.0"/><rect x="898.2" y="297.5" width="1.3" height="3.2"/><rect x="899.3" y="300.4" width="1.3" height="2.4"/><rect x="900.4" y="302.1" width="1.3" height="2.4"/><rect x="901.5" y="300.9" width="1.3" height="3.2"/><rect x="902.6" y="298.4" width="1.3" height="4.0"/><rect x="903.7" y="300.0" width="1.3" height="1.8"/></g><path d="M688.9 301.2 L690.1 301.2 L691.4 301.2 L692.6 301.1 L693.8 301.1 L695.0 301.1 L696.2 301.0 L697.4 301.0 L698.6 300.9 L699.9 300.8 L701.1 300.8 L702.3 300.7 L703.5 300.5 L704.7 300.4 L705.9 300.3 L707.2 300.1 L708.4 299.9 L709.6 299.6 L710.8 299.4 L712.0 299.1 L713.2 298.7 L714.5 298.3 L715.7 297.9 L716.9 297.4 L718.1 296.9 L719.3 296.3 L720.5 295.6 L721.8 294.8 L723.0 294.0 L724.2 293.1 L725.4 292.1 L726.6 291.0 L727.8 289.8 L729.0 288.5 L730.3 287.0 L731.5 285.5 L732.7 283.8 L733.9 282.1 L735.1 280.2 L736.3 278.1 L737.6 276.0 L738.8 273.7 L740.0 271.3 L741.2 268.8 L742.4 266.2 L743.6 263.4 L744.9 260.6 L746.1 257.7 L747.3 254.6 L748.5 251.5 L749.7 248.4 L750.9 245.2 L752.2 241.9 L753.4 238.7 L754.6 235.4 L755.8 232.2 L757.0 229.0 L758.2 225.8 L759.4 222.7 L760.7 219.8 L761.9 216.9 L763.1 214.2 L764.3 211.6 L765.5 209.2 L766.7 207.0 L768.0 205.0 L769.2 203.3 L770.4 201.7 L771.6 200.5 L772.8 199.4 L774.0 198.7 L775.3 198.2 L776.5 198.0 L777.7 198.1 L778.9 198.5 L780.1 199.1 L781.3 200.0 L782.6 201.2 L783.8 202.6 L785.0 204.3 L786.2 206.2 L787.4 208.3 L788.6 210.6 L789.8 213.1 L791.1 215.8 L792.3 218.6 L793.5 221.5 L794.7 224.6 L795.9 227.7 L797.1 230.9 L798.4 234.1 L799.6 237.4 L800.8 240.6 L802.0 243.9 L803.2 247.1 L804.4 250.3 L805.7 253.4 L806.9 256.5 L808.1 259.4 L809.3 262.3 L810.5 265.1 L811.7 267.8 L813.0 270.3 L814.2 272.8 L815.4 275.1 L816.6 277.3 L817.8 279.4 L819.0 281.3 L820.2 283.1 L821.5 284.8 L822.7 286.4 L823.9 287.9 L825.1 289.3 L826.3 290.5 L827.5 291.6 L828.8 292.7 L830.0 293.6 L831.2 294.5 L832.4 295.3 L833.6 296.0 L834.8 296.6 L836.1 297.2 L837.3 297.7 L838.5 298.2 L839.7 298.6 L840.9 298.9 L842.1 299.3 L843.4 299.5 L844.6 299.8 L845.8 300.0 L847.0 300.2 L848.2 300.4 L849.4 300.5 L850.6 300.6 L851.9 300.7 L853.1 300.8 L854.3 300.9 L855.5 301.0 L856.7 301.0 L857.9 301.1 L859.2 301.1 L860.4 301.1 L861.6 301.2 L862.8 301.2 L864.0 301.2 L865.2 301.2 L866.5 301.2 L867.7 301.2 L868.9 301.3 L870.1 301.3 L871.3 301.3 L872.5 301.3 L873.8 301.3 L875.0 301.3 L876.2 301.3 L877.4 301.3 L878.6 301.3 L879.8 301.3 L881.0 301.3 L882.3 301.3 L883.5 301.3" stroke="#ff0000" stroke-width="3.2" fill="none" stroke-linejoin="round"/><rect x="641.5" y="117.5" width="125" height="13" fill="#fff" stroke="#000" stroke-width="1"/><text x="644.3" y="127.4" font-size="10" font-weight="bold">X Projection - Spill 56672</text><text x="683.3" y="147.7" font-size="10" font-weight="bold">Position = -1.56 mm</text><text x="683.3" y="158.7" font-size="10" font-weight="bold">Sigma = 3.84 mm</text><rect x="869.5" y="117.5" width="60" height="34" fill="#fff" stroke="#000" stroke-width="1"/><path d="M869.5 125.5 h60" stroke="#000" stroke-width="1"/><text x="899.5" y="123.3" font-size="7" font-weight="bold" text-anchor="middle">hxprof</text><text x="872.2" y="132.8" font-size="7" font-weight="bold">Entries</text><text x="926" y="132.8" font-size="7" font-weight="bold" text-anchor="end">462</text><text x="872.2" y="141.4" font-size="7" font-weight="bold">Mean</text><text x="926" y="141.4" font-size="7" font-weight="bold" text-anchor="end">-1.521</text><text x="872.2" y="149.9" font-size="7" font-weight="bold">RMS</text><text x="926" y="149.9" font-size="7" font-weight="bold" text-anchor="end">4.5</text></svg>
<svg style="left:639px;top:348px" width="296" height="218" viewBox="639 348 296 218"><rect x="639" y="348" width="296" height="218" fill="#fff"/><rect x="668.5" y="369.5" width="237" height="175.0" fill="#fff" stroke="#000" stroke-width="1"/><path d="M668.5 541.5 h7 M668.5 536.5 h4 M668.5 530.5 h4 M668.5 524.5 h4 M668.5 519.5 h4 M668.5 513.5 h7 M668.5 508.5 h4 M668.5 502.5 h4 M668.5 496.5 h4 M668.5 491.5 h4 M668.5 485.5 h7 M668.5 480.5 h4 M668.5 474.5 h4 M668.5 468.5 h4 M668.5 463.5 h4 M668.5 457.5 h7 M668.5 452.5 h4 M668.5 446.5 h4 M668.5 440.5 h4 M668.5 435.5 h4 M668.5 429.5 h7 M668.5 424.5 h4 M668.5 418.5 h4 M668.5 412.5 h4 M668.5 407.5 h4 M668.5 401.5 h7 M668.5 396.5 h4 M668.5 390.5 h4 M668.5 384.5 h4 M668.5 379.5 h4 M668.5 373.5 h7 M677.5 544.5 v-6.5 M686.5 544.5 v-3.5 M696.5 544.5 v-3.5 M705.5 544.5 v-3.5 M714.5 544.5 v-3.5 M724.5 544.5 v-6.5 M733.5 544.5 v-3.5 M742.5 544.5 v-3.5 M752.5 544.5 v-3.5 M761.5 544.5 v-3.5 M770.5 544.5 v-6.5 M780.5 544.5 v-3.5 M789.5 544.5 v-3.5 M798.5 544.5 v-3.5 M807.5 544.5 v-3.5 M817.5 544.5 v-6.5 M826.5 544.5 v-3.5 M835.5 544.5 v-3.5 M845.5 544.5 v-3.5 M854.5 544.5 v-3.5 M863.5 544.5 v-6.5 M872.5 544.5 v-3.5 M882.5 544.5 v-3.5 M891.5 544.5 v-3.5 M900.5 544.5 v-3.5" stroke="#000" stroke-width="1" fill="none" shape-rendering="crispEdges"/><text x="665" y="544.2" font-size="8" text-anchor="end">0</text><text x="665" y="516.2" font-size="8" text-anchor="end">10000</text><text x="665" y="488.2" font-size="8" text-anchor="end">20000</text><text x="665" y="460.2" font-size="8" text-anchor="end">30000</text><text x="665" y="432.2" font-size="8" text-anchor="end">40000</text><text x="665" y="404.2" font-size="8" text-anchor="end">50000</text><text x="665" y="376.2" font-size="8" text-anchor="end">60000</text><text x="677.8" y="555.3" font-size="8" text-anchor="middle">-20</text><text x="724.3" y="555.3" font-size="8" text-anchor="middle">-10</text><text x="769.4" y="555.3" font-size="8" text-anchor="middle">0</text><text x="815.9" y="555.3" font-size="8" text-anchor="middle">10</text><text x="862.4" y="555.3" font-size="8" text-anchor="middle">20</text><text x="903.8" y="559.7" font-size="8" font-weight="bold" text-anchor="end">Y pos. (mm)</text><g fill="#000"><rect x="668.0" y="541.2" width="1.3" height="1.9"/><rect x="669.2" y="540.6" width="1.3" height="1.9"/><rect x="670.4" y="541.0" width="1.3" height="1.9"/><rect x="671.6" y="541.0" width="1.3" height="1.9"/><rect x="672.8" y="541.1" width="1.3" height="1.9"/><rect x="674.0" y="541.2" width="1.3" height="1.9"/><rect x="675.2" y="541.1" width="1.3" height="1.9"/><rect x="676.4" y="541.3" width="1.3" height="1.9"/><rect x="677.6" y="541.4" width="1.3" height="1.9"/><rect x="678.8" y="541.5" width="1.3" height="1.9"/><rect x="680.0" y="541.6" width="1.3" height="1.9"/><rect x="681.2" y="541.2" width="1.3" height="1.9"/><rect x="682.4" y="541.1" width="1.3" height="1.9"/><rect x="683.6" y="540.8" width="1.3" height="1.9"/><rect x="684.8" y="541.1" width="1.3" height="1.9"/><rect x="686.0" y="541.2" width="1.3" height="1.9"/><rect x="687.2" y="541.1" width="1.3" height="1.9"/><rect x="688.4" y="541.2" width="1.3" height="1.9"/><rect x="689.6" y="541.7" width="1.3" height="1.9"/><rect x="690.8" y="541.0" width="1.3" height="1.9"/><rect x="692.0" y="541.4" width="1.3" height="1.9"/><rect x="693.2" y="541.2" width="1.3" height="1.9"/><rect x="694.4" y="541.3" width="1.3" height="1.9"/><rect x="695.6" y="540.5" width="1.3" height="1.9"/><rect x="696.8" y="541.0" width="1.3" height="1.9"/><rect x="698.0" y="541.1" width="1.3" height="1.9"/><rect x="699.2" y="541.5" width="1.3" height="1.9"/><rect x="700.4" y="541.0" width="1.3" height="1.9"/><rect x="701.6" y="541.5" width="1.3" height="1.9"/><rect x="702.8" y="540.9" width="1.3" height="1.9"/><rect x="704.0" y="541.6" width="1.3" height="1.9"/><rect x="705.2" y="541.3" width="1.3" height="1.9"/><rect x="706.4" y="541.0" width="1.3" height="1.9"/><rect x="707.6" y="541.5" width="1.3" height="1.9"/><rect x="708.8" y="541.2" width="1.3" height="1.9"/><rect x="710.0" y="541.2" width="1.3" height="1.9"/><rect x="711.2" y="541.0" width="1.3" height="1.9"/><rect x="712.4" y="541.4" width="1.3" height="1.9"/><rect x="713.6" y="541.1" width="1.3" height="1.9"/><rect x="714.8" y="540.7" width="1.3" height="1.9"/><rect x="716.0" y="541.6" width="1.3" height="1.9"/><rect x="717.2" y="541.5" width="1.3" height="1.9"/><rect x="718.4" y="541.1" width="1.3" height="1.9"/><rect x="719.6" y="541.4" width="1.3" height="1.9"/><rect x="720.8" y="541.6" width="1.3" height="1.9"/><rect x="722.0" y="540.9" width="1.3" height="1.9"/><rect x="723.2" y="541.0" width="1.3" height="1.9"/><rect x="724.4" y="540.9" width="1.3" height="1.9"/><rect x="725.6" y="541.0" width="1.3" height="1.9"/><rect x="726.8" y="541.0" width="1.3" height="1.9"/><rect x="728.0" y="541.4" width="1.3" height="1.9"/><rect x="729.2" y="541.8" width="1.3" height="1.9"/><rect x="730.4" y="541.1" width="1.3" height="1.9"/><rect x="731.6" y="541.4" width="1.3" height="1.9"/><rect x="732.8" y="541.1" width="1.3" height="1.9"/><rect x="734.0" y="540.9" width="1.3" height="1.9"/><rect x="735.2" y="541.2" width="1.3" height="1.9"/><rect x="736.4" y="540.8" width="1.3" height="1.9"/><rect x="737.6" y="540.0" width="1.3" height="1.9"/><rect x="738.8" y="539.9" width="1.3" height="1.9"/><rect x="740.0" y="539.9" width="1.3" height="1.9"/><rect x="741.2" y="538.8" width="1.3" height="1.9"/><rect x="742.4" y="537.6" width="1.3" height="1.9"/><rect x="743.6" y="536.0" width="1.3" height="1.9"/><rect x="744.8" y="534.1" width="1.3" height="1.9"/><rect x="746.0" y="531.9" width="1.3" height="1.9"/><rect x="747.2" y="528.8" width="1.3" height="1.9"/><rect x="748.4" y="524.7" width="1.3" height="1.9"/><rect x="749.6" y="520.7" width="1.3" height="1.9"/><rect x="750.8" y="514.6" width="1.3" height="1.9"/><rect x="752.0" y="508.5" width="1.3" height="1.9"/><rect x="753.2" y="501.6" width="1.3" height="1.9"/><rect x="754.4" y="493.9" width="1.3" height="1.9"/><rect x="755.6" y="485.3" width="1.3" height="1.9"/><rect x="756.8" y="477.1" width="1.3" height="1.9"/><rect x="758.0" y="468.7" width="1.3" height="1.9"/><rect x="759.2" y="459.6" width="1.3" height="1.9"/><rect x="760.4" y="451.5" width="1.3" height="1.9"/><rect x="761.6" y="445.0" width="1.3" height="1.9"/><rect x="762.8" y="439.4" width="1.3" height="1.9"/><rect x="764.0" y="435.4" width="1.3" height="1.9"/><rect x="765.2" y="433.4" width="1.3" height="1.9"/><rect x="766.4" y="432.6" width="1.3" height="1.9"/><rect x="767.6" y="434.0" width="1.3" height="1.9"/><rect x="768.8" y="437.4" width="1.3" height="1.9"/><rect x="770.0" y="442.2" width="1.3" height="1.9"/><rect x="771.2" y="449.0" width="1.3" height="1.9"/><rect x="772.4" y="456.1" width="1.3" height="1.9"/><rect x="773.6" y="464.6" width="1.3" height="1.9"/><rect x="774.8" y="473.1" width="1.3" height="1.9"/><rect x="776.0" y="481.6" width="1.3" height="1.9"/><rect x="777.2" y="490.1" width="1.3" height="1.9"/><rect x="778.4" y="498.0" width="1.3" height="1.9"/><rect x="779.6" y="505.4" width="1.3" height="1.9"/><rect x="780.8" y="512.6" width="1.3" height="1.9"/><rect x="782.0" y="517.7" width="1.3" height="1.9"/><rect x="783.2" y="523.5" width="1.3" height="1.9"/><rect x="784.4" y="527.2" width="1.3" height="1.9"/><rect x="785.6" y="530.5" width="1.3" height="1.9"/><rect x="786.8" y="533.3" width="1.3" height="1.9"/><rect x="788.0" y="535.3" width="1.3" height="1.9"/><rect x="789.2" y="537.1" width="1.3" height="1.9"/><rect x="790.4" y="538.6" width="1.3" height="1.9"/><rect x="791.6" y="539.0" width="1.3" height="1.9"/><rect x="792.8" y="539.9" width="1.3" height="1.9"/><rect x="794.0" y="540.6" width="1.3" height="1.9"/><rect x="795.2" y="540.6" width="1.3" height="1.9"/><rect x="796.4" y="540.9" width="1.3" height="1.9"/><rect x="797.6" y="540.9" width="1.3" height="1.9"/><rect x="798.8" y="541.3" width="1.3" height="1.9"/><rect x="800.0" y="541.1" width="1.3" height="1.9"/><rect x="801.2" y="541.3" width="1.3" height="1.9"/><rect x="802.4" y="540.8" width="1.3" height="1.9"/><rect x="803.6" y="541.3" width="1.3" height="1.9"/><rect x="804.8" y="540.9" width="1.3" height="1.9"/><rect x="806.0" y="541.3" width="1.3" height="1.9"/><rect x="807.2" y="541.0" width="1.3" height="1.9"/><rect x="808.4" y="540.7" width="1.3" height="1.9"/><rect x="809.6" y="541.4" width="1.3" height="1.9"/><rect x="810.8" y="541.2" width="1.3" height="1.9"/><rect x="812.0" y="541.5" width="1.3" height="1.9"/><rect x="813.2" y="541.5" width="1.3" height="1.9"/><rect x="814.4" y="541.4" width="1.3" height="1.9"/><rect x="815.6" y="541.2" width="1.3" height="1.9"/><rect x="816.8" y="541.0" width="1.3" height="1.9"/><rect x="818.0" y="541.0" width="1.3" height="1.9"/><rect x="819.2" y="541.4" width="1.3" height="1.9"/><rect x="820.4" y="541.2" width="1.3" height="1.9"/><rect x="821.6" y="541.7" width="1.3" height="1.9"/><rect x="822.8" y="541.1" width="1.3" height="1.9"/><rect x="824.0" y="541.3" width="1.3" height="1.9"/><rect x="825.2" y="541.6" width="1.3" height="1.9"/><rect x="826.4" y="541.5" width="1.3" height="1.9"/><rect x="827.6" y="541.1" width="1.3" height="1.9"/><rect x="828.8" y="541.2" width="1.3" height="1.9"/><rect x="830.0" y="541.1" width="1.3" height="1.9"/><rect x="831.2" y="541.4" width="1.3" height="1.9"/><rect x="832.4" y="541.2" width="1.3" height="1.9"/><rect x="833.6" y="541.3" width="1.3" height="1.9"/><rect x="834.8" y="541.7" width="1.3" height="1.9"/><rect x="836.0" y="541.3" width="1.3" height="1.9"/><rect x="837.2" y="541.3" width="1.3" height="1.9"/><rect x="838.4" y="541.5" width="1.3" height="1.9"/><rect x="839.6" y="541.1" width="1.3" height="1.9"/><rect x="840.8" y="540.7" width="1.3" height="1.9"/><rect x="842.0" y="540.9" width="1.3" height="1.9"/><rect x="843.2" y="541.3" width="1.3" height="1.9"/><rect x="844.4" y="541.6" width="1.3" height="1.9"/><rect x="845.6" y="541.3" width="1.3" height="1.9"/><rect x="846.8" y="541.4" width="1.3" height="1.9"/><rect x="848.0" y="541.2" width="1.3" height="1.9"/><rect x="849.2" y="541.0" width="1.3" height="1.9"/><rect x="850.4" y="541.3" width="1.3" height="1.9"/><rect x="851.6" y="541.6" width="1.3" height="1.9"/><rect x="852.8" y="540.9" width="1.3" height="1.9"/><rect x="854.0" y="541.3" width="1.3" height="1.9"/><rect x="855.2" y="540.9" width="1.3" height="1.9"/><rect x="856.4" y="541.5" width="1.3" height="1.9"/><rect x="857.6" y="540.6" width="1.3" height="1.9"/><rect x="858.8" y="541.6" width="1.3" height="1.9"/><rect x="860.0" y="541.2" width="1.3" height="1.9"/><rect x="861.2" y="541.1" width="1.3" height="1.9"/><rect x="862.4" y="541.9" width="1.3" height="1.9"/><rect x="863.6" y="541.5" width="1.3" height="1.9"/><rect x="864.8" y="541.7" width="1.3" height="1.9"/><rect x="866.0" y="540.8" width="1.3" height="1.9"/><rect x="867.2" y="541.1" width="1.3" height="1.9"/><rect x="868.4" y="541.5" width="1.3" height="1.9"/><rect x="869.6" y="541.7" width="1.3" height="1.9"/><rect x="870.8" y="541.7" width="1.3" height="1.9"/><rect x="872.0" y="541.2" width="1.3" height="1.9"/><rect x="873.2" y="541.5" width="1.3" height="1.9"/><rect x="874.4" y="541.2" width="1.3" height="1.9"/><rect x="875.6" y="541.4" width="1.3" height="1.9"/><rect x="876.8" y="541.7" width="1.3" height="1.9"/><rect x="878.0" y="540.8" width="1.3" height="1.9"/><rect x="879.2" y="541.1" width="1.3" height="1.9"/><rect x="880.4" y="541.5" width="1.3" height="1.9"/><rect x="881.6" y="541.4" width="1.3" height="1.9"/><rect x="882.8" y="540.9" width="1.3" height="1.9"/><rect x="884.0" y="541.1" width="1.3" height="1.9"/><rect x="885.2" y="541.6" width="1.3" height="1.9"/><rect x="886.4" y="540.9" width="1.3" height="1.9"/><rect x="887.6" y="541.4" width="1.3" height="1.9"/><rect x="888.8" y="541.1" width="1.3" height="1.9"/><rect x="890.0" y="541.6" width="1.3" height="1.9"/><rect x="891.2" y="541.4" width="1.3" height="1.9"/><rect x="892.4" y="541.1" width="1.3" height="1.9"/><rect x="893.6" y="541.6" width="1.3" height="1.9"/><rect x="894.8" y="541.3" width="1.3" height="1.9"/><rect x="896.0" y="541.2" width="1.3" height="1.9"/><rect x="897.2" y="541.4" width="1.3" height="1.9"/><rect x="898.4" y="540.9" width="1.3" height="1.9"/><rect x="899.6" y="541.1" width="1.3" height="1.9"/><rect x="900.8" y="541.3" width="1.3" height="1.9"/><rect x="902.0" y="541.0" width="1.3" height="1.9"/><rect x="903.2" y="540.9" width="1.3" height="1.9"/></g><path d="M673.9 541.3 L674.9 541.3 L675.8 541.3 L676.7 541.3 L677.7 541.3 L678.6 541.3 L679.5 541.3 L680.5 541.3 L681.4 541.3 L682.3 541.3 L683.2 541.3 L684.2 541.3 L685.1 541.3 L686.0 541.3 L687.0 541.3 L687.9 541.3 L688.8 541.3 L689.8 541.3 L690.7 541.3 L691.6 541.3 L692.5 541.3 L693.5 541.3 L694.4 541.3 L695.3 541.3 L696.3 541.3 L697.2 541.3 L698.1 541.3 L699.1 541.3 L700.0 541.3 L700.9 541.3 L701.8 541.3 L702.8 541.3 L703.7 541.3 L704.6 541.3 L705.6 541.3 L706.5 541.3 L707.4 541.3 L708.4 541.3 L709.3 541.3 L710.2 541.3 L711.1 541.3 L712.1 541.3 L713.0 541.3 L713.9 541.3 L714.9 541.3 L715.8 541.3 L716.7 541.3 L717.7 541.3 L718.6 541.3 L719.5 541.3 L720.4 541.3 L721.4 541.3 L722.3 541.3 L723.2 541.3 L724.2 541.3 L725.1 541.3 L726.0 541.3 L727.0 541.3 L727.9 541.3 L728.8 541.3 L729.7 541.3 L730.7 541.3 L731.6 541.3 L732.5 541.2 L733.5 541.2 L734.4 541.2 L735.3 541.1 L736.3 541.1 L737.2 540.9 L738.1 540.8 L739.0 540.6 L740.0 540.3 L740.9 539.9 L741.8 539.4 L742.8 538.7 L743.7 537.9 L744.6 536.8 L745.6 535.4 L746.5 533.7 L747.4 531.6 L748.3 529.0 L749.3 526.0 L750.2 522.4 L751.1 518.3 L752.1 513.6 L753.0 508.3 L753.9 502.4 L754.9 496.0 L755.8 489.2 L756.7 482.0 L757.6 474.5 L758.6 467.0 L759.5 459.6 L760.4 452.5 L761.4 445.9 L762.3 439.9 L763.2 434.8 L764.2 430.7 L765.1 427.8 L766.0 426.1 L766.9 425.7 L767.9 426.6 L768.8 428.8 L769.7 432.2 L770.7 436.8 L771.6 442.2 L772.5 448.5 L773.5 455.3 L774.4 462.6 L775.3 470.0 L776.2 477.5 L777.2 484.9 L778.1 491.9 L779.0 498.6 L780.0 504.8 L780.9 510.5 L781.8 515.5 L782.8 520.0 L783.7 523.9 L784.6 527.3 L785.5 530.1 L786.5 532.5 L787.4 534.4 L788.3 536.0 L789.3 537.2 L790.2 538.2 L791.1 539.0 L792.1 539.6 L793.0 540.1 L793.9 540.4 L794.8 540.7 L795.8 540.9 L796.7 541.0 L797.6 541.1 L798.6 541.2 L799.5 541.2 L800.4 541.2 L801.4 541.3 L802.3 541.3 L803.2 541.3 L804.1 541.3 L805.1 541.3 L806.0 541.3 L806.9 541.3 L807.9 541.3 L808.8 541.3 L809.7 541.3 L810.7 541.3 L811.6 541.3 L812.5 541.3 L813.4 541.3 L814.4 541.3 L815.3 541.3 L816.2 541.3 L817.2 541.3 L818.1 541.3 L819.0 541.3 L820.0 541.3 L820.9 541.3 L821.8 541.3 L822.7 541.3 L823.7 541.3 L824.6 541.3 L825.5 541.3 L826.5 541.3 L827.4 541.3 L828.3 541.3 L829.3 541.3 L830.2 541.3 L831.1 541.3 L832.0 541.3 L833.0 541.3 L833.9 541.3 L834.8 541.3 L835.8 541.3 L836.7 541.3 L837.6 541.3 L838.6 541.3 L839.5 541.3 L840.4 541.3 L841.3 541.3 L842.3 541.3 L843.2 541.3 L844.1 541.3 L845.1 541.3 L846.0 541.3 L846.9 541.3 L847.9 541.3 L848.8 541.3 L849.7 541.3 L850.6 541.3 L851.6 541.3 L852.5 541.3 L853.4 541.3 L854.4 541.3 L855.3 541.3 L856.2 541.3 L857.2 541.3 L858.1 541.3 L859.0 541.3 L859.9 541.3 L860.9 541.3 L861.8 541.3 L862.7 541.3 L863.7 541.3 L864.6 541.3 L865.5 541.3" stroke="#ff0000" stroke-width="3.2" fill="none" stroke-linejoin="round"/><rect x="641.5" y="349.5" width="126" height="13" fill="#fff" stroke="#000" stroke-width="1"/><text x="644.3" y="359.4" font-size="10" font-weight="bold">Y Projection - Spill 56672</text><text x="683.3" y="379.7" font-size="10" font-weight="bold">Position = -0.92 mm</text><text x="683.3" y="390.7" font-size="10" font-weight="bold">Sigma = 1.87 mm</text><rect x="869.5" y="349.5" width="60" height="34" fill="#fff" stroke="#000" stroke-width="1"/><path d="M869.5 357.5 h60" stroke="#000" stroke-width="1"/><text x="899.5" y="355.3" font-size="7" font-weight="bold" text-anchor="middle">hyprof</text><text x="872.2" y="364.8" font-size="7" font-weight="bold">Entries</text><text x="926" y="364.8" font-size="7" font-weight="bold" text-anchor="end">618</text><text x="872.2" y="373.4" font-size="7" font-weight="bold">Mean</text><text x="926" y="373.4" font-size="7" font-weight="bold" text-anchor="end">-0.8756</text><text x="872.2" y="381.9" font-size="7" font-weight="bold">RMS</text><text x="926" y="381.9" font-size="7" font-weight="bold" text-anchor="end">3.18</text></svg>
</div></body></html>
